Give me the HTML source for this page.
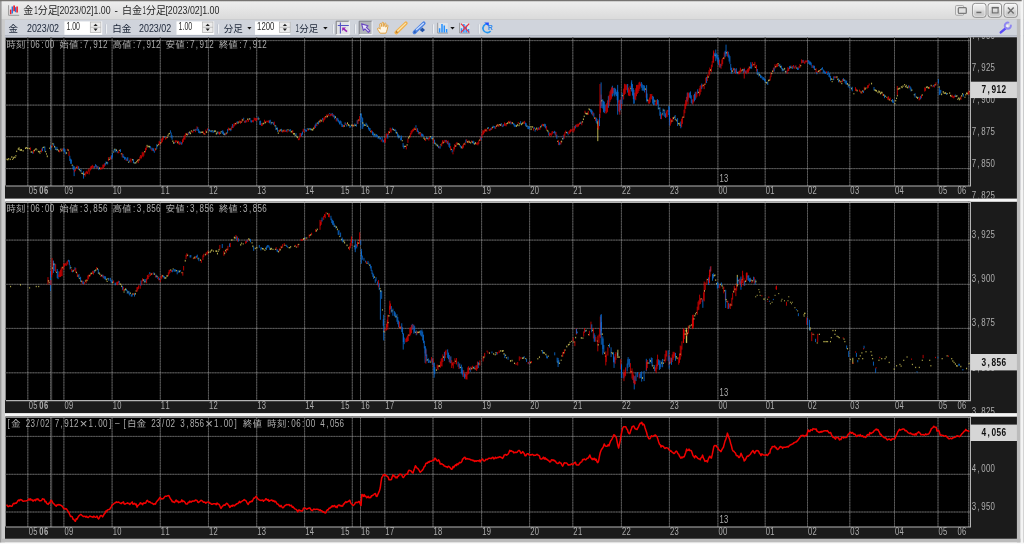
<!DOCTYPE html>
<html lang="ja"><head><meta charset="utf-8"><title>金1分足[2023/02]1.00 - 白金1分足[2023/02]1.00</title>
<style>
html,body{margin:0;padding:0;background:#c4c4c4;}
body{width:1024px;height:544px;overflow:hidden;position:relative;font-family:"Liberation Sans","Noto Sans CJK JP",sans-serif;}
.window{position:absolute;left:0;top:0;width:1024px;height:544px;overflow:hidden;background:#cfcfcf;}
.window>div{position:absolute;left:0;width:1024px;}
.window svg{display:block;position:absolute;left:0;top:0;}
.titlebar{top:0;height:19px;}
.toolbar{top:19px;height:19px;}
.charts{top:36px;height:508px;}
.charts svg{filter:blur(0.35px);}
.titlebar svg,.toolbar svg{filter:blur(0.3px);}
.frame{top:0;height:544px;pointer-events:none;}
text{white-space:pre;}
</style></head><body>
<div class="window">
<div class="titlebar"><svg width="1024" height="19" viewBox="0 0 1024 19">
<defs><linearGradient id="tg" x1="0" y1="0" x2="0" y2="1"><stop offset="0" stop-color="#efefef"/><stop offset="1" stop-color="#dadada"/></linearGradient>
<linearGradient id="bg" x1="0" y1="0" x2="0" y2="1"><stop offset="0" stop-color="#f6f6f6"/><stop offset="0.45" stop-color="#e2e2e2"/><stop offset="0.55" stop-color="#d4d4d4"/><stop offset="1" stop-color="#c2c2c2"/></linearGradient></defs>
<rect x="0" y="0" width="1024" height="19.3" fill="url(#tg)"/>
<g><path d="M8.6 5.2V15.3H19.2" stroke="#9a9a9a" stroke-width="1" fill="none"/><path d="M10.7 9.6V14.2" stroke="#f02030" stroke-width="1.5"/><path d="M12.3 6.4V13.4" stroke="#2878e0" stroke-width="1.4"/><path d="M14.1 5.6V11.2" stroke="#e81828" stroke-width="1.7"/><path d="M15.6 7.2V12.2" stroke="#2878e0" stroke-width="1.3"/><path d="M17.1 6.4V12.6" stroke="#f02030" stroke-width="1.6"/></g>
<text x="23.30" y="13.80" font-family='"Liberation Sans","Noto Sans CJK JP",sans-serif' font-size="10" fill="#262626">金</text>
<text x="34.30" y="13.80" font-family='"Liberation Sans","Noto Sans CJK JP",sans-serif' font-size="10" fill="#262626" textLength="3.40" lengthAdjust="spacingAndGlyphs">1</text>
<text x="37.70" y="13.80" font-family='"Liberation Sans","Noto Sans CJK JP",sans-serif' font-size="10" fill="#262626">分足</text>
<text x="57.00" y="13.80" font-family='"Liberation Sans","Noto Sans CJK JP",sans-serif' font-size="10" fill="#262626" textLength="53.60" lengthAdjust="spacingAndGlyphs">[2023/02]1.00</text>
<text x="114.60" y="13.80" font-family='"Liberation Sans","Noto Sans CJK JP",sans-serif' font-size="10" fill="#262626" textLength="3.40" lengthAdjust="spacingAndGlyphs">-</text>
<text x="122.10" y="13.80" font-family='"Liberation Sans","Noto Sans CJK JP",sans-serif' font-size="10" fill="#262626">白金</text>
<text x="142.60" y="13.80" font-family='"Liberation Sans","Noto Sans CJK JP",sans-serif' font-size="10" fill="#262626" textLength="3.40" lengthAdjust="spacingAndGlyphs">1</text>
<text x="146.00" y="13.80" font-family='"Liberation Sans","Noto Sans CJK JP",sans-serif' font-size="10" fill="#262626">分足</text>
<text x="165.40" y="13.80" font-family='"Liberation Sans","Noto Sans CJK JP",sans-serif' font-size="10" fill="#262626" textLength="54.00" lengthAdjust="spacingAndGlyphs">[2023/02]1.00</text>
<rect x="955.6" y="5.6" width="8" height="9.6" rx="0.8" fill="#efefef" stroke="#a4a4a4" stroke-width="1.0"/>
<rect x="958.3" y="7.6" width="8" height="5.8" rx="1" fill="#e0e0e0" stroke="#7a7a7a" stroke-width="1.3"/>
<rect x="972.6" y="3.4" width="13.4" height="13.9" rx="2.6" fill="url(#bg)" stroke="#8e8e8e" stroke-width="1.0"/>
<rect x="973.6" y="4.4" width="11.4" height="11.9" rx="1.8" fill="none" stroke="#ffffff" stroke-opacity="0.7" stroke-width="0.8"/>
<rect x="988.1" y="3.4" width="13.4" height="13.9" rx="2.6" fill="url(#bg)" stroke="#8e8e8e" stroke-width="1.0"/>
<rect x="989.1" y="4.4" width="11.4" height="11.9" rx="1.8" fill="none" stroke="#ffffff" stroke-opacity="0.7" stroke-width="0.8"/>
<rect x="1004.0" y="3.4" width="13.4" height="13.9" rx="2.6" fill="url(#bg)" stroke="#8e8e8e" stroke-width="1.0"/>
<rect x="1005.0" y="4.4" width="11.4" height="11.9" rx="1.8" fill="none" stroke="#ffffff" stroke-opacity="0.7" stroke-width="0.8"/>
<rect x="976.4" y="11.7" width="5" height="1.5" fill="#6a6a6a"/>
<rect x="992.3" y="7.6" width="5.8" height="5.3" fill="none" stroke="#6a6a6a" stroke-width="1.1"/><rect x="991.8" y="6.9" width="6.8" height="1.5" fill="#6a6a6a"/>
<path d="M1007.9 7.6L1013.7 13.4M1013.7 7.6L1007.9 13.4" stroke="#6c6c6c" stroke-width="1.4" fill="none"/>
</svg></div>
<div class="toolbar"><svg width="1024" height="19" viewBox="0 19 1024 19">
<rect x="0" y="19" width="1024" height="18.6" fill="#d0d4dc"/>
<rect x="0" y="19" width="1024" height="0.25" fill="#dcdcdc"/>
<rect x="0" y="19.2" width="1024" height="0.7" fill="#c8c8c8"/>
<rect x="0" y="35.2" width="1024" height="1.0" fill="#aeb4c0"/>
<rect x="0" y="36.2" width="1024" height="1.2" fill="#c9cdd6"/>
<text x="8.50" y="31.70" font-family='"Liberation Sans","Noto Sans CJK JP",sans-serif' font-size="9.5" fill="#1a2436">金</text>
<text x="27.00" y="31.70" font-family='"Liberation Sans","Noto Sans CJK JP",sans-serif' font-size="10.2" fill="#1a2436" textLength="32.00" lengthAdjust="spacingAndGlyphs">2023/02</text>
<rect x="64.4" y="21.4" width="37.8" height="13.7" fill="#ffffff"/><rect x="64.4" y="34.9" width="37.8" height="0.7" fill="#a4acbc"/><text x="66.40" y="29.90" font-family='"Liberation Sans","Noto Sans CJK JP",sans-serif' font-size="10.4" fill="#2a2a2a" textLength="13.60" lengthAdjust="spacingAndGlyphs">1.00</text>
<rect x="90.3" y="22.0" width="10.6" height="10.6" fill="#ececec" stroke="#b0b0b0" stroke-width="0.7"/><path d="M90.3 27.3H100.89999999999999" stroke="#b0b0b0" stroke-width="0.7"/><path d="M93.5 26.1L95.6 23.7L97.69999999999999 26.1Z" fill="#222"/><path d="M93.5 28.6L95.6 31.0L97.69999999999999 28.6Z" fill="#222"/>
<path d="M105.5 24.3V33.6" stroke="#b9bec8" stroke-width="0.8"/><path d="M106.4 24.3V33.6" stroke="#f2f4f7" stroke-width="1.0"/>
<text x="112.20" y="31.70" font-family='"Liberation Sans","Noto Sans CJK JP",sans-serif' font-size="9.5" fill="#1a2436">白金</text>
<text x="139.00" y="31.70" font-family='"Liberation Sans","Noto Sans CJK JP",sans-serif' font-size="10.2" fill="#1a2436" textLength="32.20" lengthAdjust="spacingAndGlyphs">2023/02</text>
<rect x="176.5" y="21.4" width="37.69999999999999" height="13.7" fill="#ffffff"/><rect x="176.5" y="34.9" width="37.69999999999999" height="0.7" fill="#a4acbc"/><text x="178.60" y="29.90" font-family='"Liberation Sans","Noto Sans CJK JP",sans-serif' font-size="10.4" fill="#2a2a2a" textLength="13.60" lengthAdjust="spacingAndGlyphs">1.00</text>
<rect x="202.4" y="22.0" width="10.6" height="10.6" fill="#ececec" stroke="#b0b0b0" stroke-width="0.7"/><path d="M202.4 27.3H213.0" stroke="#b0b0b0" stroke-width="0.7"/><path d="M205.60000000000002 26.1L207.70000000000002 23.7L209.8 26.1Z" fill="#222"/><path d="M205.60000000000002 28.6L207.70000000000002 31.0L209.8 28.6Z" fill="#222"/>
<path d="M217.7 24.3V33.6" stroke="#b9bec8" stroke-width="0.8"/><path d="M218.6 24.3V33.6" stroke="#f2f4f7" stroke-width="1.0"/>
<text x="223.80" y="31.70" font-family='"Liberation Sans","Noto Sans CJK JP",sans-serif' font-size="9.5" fill="#1a2436">分足</text>
<path d="M247.3 27.0H251.5L249.4 29.5Z" fill="#111"/>
<rect x="255.0" y="21.4" width="35.19999999999999" height="13.7" fill="#ffffff"/><rect x="255.0" y="34.9" width="35.19999999999999" height="0.7" fill="#a4acbc"/><text x="257.10" y="29.90" font-family='"Liberation Sans","Noto Sans CJK JP",sans-serif' font-size="10.4" fill="#2a2a2a" textLength="17.30" lengthAdjust="spacingAndGlyphs">1200</text>
<rect x="279.6" y="22.0" width="10.6" height="10.6" fill="#ececec" stroke="#b0b0b0" stroke-width="0.7"/><path d="M279.6 27.3H290.20000000000005" stroke="#b0b0b0" stroke-width="0.7"/><path d="M282.8 26.1L284.90000000000003 23.7L287.00000000000006 26.1Z" fill="#222"/><path d="M282.8 28.6L284.90000000000003 31.0L287.00000000000006 28.6Z" fill="#222"/>
<text x="295.50" y="31.70" font-family='"Liberation Sans","Noto Sans CJK JP",sans-serif' font-size="10.2" fill="#1a2436" textLength="3.40" lengthAdjust="spacingAndGlyphs">1</text>
<text x="299.20" y="31.70" font-family='"Liberation Sans","Noto Sans CJK JP",sans-serif' font-size="9.5" fill="#1a2436">分足</text>
<path d="M323.2 27.0H327.6L325.4 29.5Z" fill="#111"/>
<path d="M332.5 24.3V33.6" stroke="#b9bec8" stroke-width="0.8"/><path d="M333.4 24.3V33.6" stroke="#f2f4f7" stroke-width="1.0"/>
<rect x="336.2" y="21.2" width="13" height="13.4" fill="#e2e3e6"/><path d="M336.2 34.6V21.2H349.2" stroke="#7c7c80" stroke-width="1" fill="none"/><path d="M336.2 34.6H349.2V21.2" stroke="#f6f6f8" stroke-width="1" fill="none"/>
<path d="M340.4 22.6V33.4M337.8 25.5H348.8" stroke="#5252c4" stroke-width="1.1" fill="none"/>
<path d="M347 31.6L343.4 28.6" stroke="#9a22b4" stroke-width="1.5" fill="none"/><path d="M342.2 27.6H346.0L342.2 31.0Z" fill="#9a22b4"/>
<path d="M354.70000000000005 24.3V33.6" stroke="#b9bec8" stroke-width="0.8"/><path d="M355.6 24.3V33.6" stroke="#f2f4f7" stroke-width="1.0"/>
<rect x="359.2" y="21.2" width="12.9" height="13.4" fill="#b1b5bb"/><path d="M359.2 34.6V21.2H372.1" stroke="#7e8088" stroke-width="1" fill="none"/><path d="M359.2 34.6H372.1V21.2" stroke="#f4f4f8" stroke-width="1" fill="none"/>
<path d="M361.6 23.9L368.0 25.8L366.4 27.4L369.9 30.9L368.4 32.4L364.9 28.9L363.4 30.4Z" fill="#e8e4fa" stroke="#6a48c0" stroke-width="1.1" stroke-linejoin="round"/>
<path d="M380.2 33.2C378.8 31 377.2 29.4 377.6 28.4C378.2 27.6 379.4 28.2 380.2 29.2L379.8 24.2C379.9 23.2 381.2 23.2 381.4 24.2L381.8 26.6L382 22.9C382.2 22 383.5 22 383.6 23L383.8 26.6L384.6 23.6C385 22.8 386 23 386 24L385.8 27.2L386.8 25.4C387.4 24.8 388.1 25.2 387.9 26.2C387.4 28.6 387 31 385.8 33.2Z" fill="#fff6e4" stroke="#e0a040" stroke-width="1.0" stroke-linejoin="round"/>
<path d="M396.2 32.6L405.9 23.2" stroke="#efb04e" stroke-width="3.6" stroke-linecap="round"/><path d="M397.4 31.2L405.6 23.4" stroke="#fde4aa" stroke-width="1.3" stroke-linecap="round"/><path d="M395.7 33.1L398.2 32.4L396.4 30.6Z" fill="#b87828"/>
<path d="M414.4 32.4L423.8 23.2" stroke="#4b82e2" stroke-width="3.6" stroke-linecap="round"/><path d="M416.6 29.6L423.4 23.4" stroke="#c8dcff" stroke-width="1.3" stroke-linecap="round"/><path d="M413.8 33.1L416.4 32.4L414.5 30.6Z" fill="#2c5cb0"/><path d="M422.4 27.4L425.0 29.9L422.4 32.3L419.8 29.9Z" fill="#2454a8"/>
<path d="M432.70000000000005 24.3V33.6" stroke="#b9bec8" stroke-width="0.8"/><path d="M433.6 24.3V33.6" stroke="#f2f4f7" stroke-width="1.0"/>
<rect x="437.4" y="23.0" width="10.4" height="10" fill="#dfe3e8"/><path d="M437.7 22.8V33.0H448.0" stroke="#8e8e92" stroke-width="0.9" fill="none"/><path d="M439.59999999999997 28.2V32.6M442.0 23.9V32.6M444.29999999999995 25.4V32.6M446.59999999999997 29.0V32.6" stroke="#2490ff" stroke-width="1.5" fill="none"/>
<path d="M450.3 27.0H454.7L452.5 29.6Z" fill="#111"/>
<rect x="459.3" y="23.0" width="10.4" height="10" fill="#dfe3e8"/><path d="M459.6 22.8V33.0H469.90000000000003" stroke="#8e8e92" stroke-width="0.9" fill="none"/><path d="M461.5 28.2V32.6M463.90000000000003 23.9V32.6M466.2 25.4V32.6M468.5 29.0V32.6" stroke="#2490ff" stroke-width="1.5" fill="none"/>
<path d="M461.0 23.6L469.2 32.4M469.2 23.6L461.0 32.4" stroke="#f03040" stroke-width="1.3" fill="none"/>
<path d="M478.40000000000003 24.3V33.6" stroke="#b9bec8" stroke-width="0.8"/><path d="M479.3 24.3V33.6" stroke="#f2f4f7" stroke-width="1.0"/>
<path d="M487.6 24.0A4.3 4.3 0 1 0 490.6 31.0" stroke="#2496f0" stroke-width="1.6" fill="none"/><path d="M484.2 22.4H488.8V26.4Z" fill="#2050ff"/>
<text x="488.00" y="30.20" font-family='"Liberation Sans","Noto Sans CJK JP",sans-serif' font-size="7.4" fill="#2a86ee" textLength="4.80" lengthAdjust="spacingAndGlyphs" font-weight="bold">R</text>
<path d="M1000.8 32.4L1005.6 28.4" stroke="#5a4af8" stroke-width="2.5" stroke-linecap="round"/><path d="M1008.4 22.6A3.1 3.1 0 1 0 1010.9 25.4" stroke="#8f86f2" stroke-width="1.9" fill="none" stroke-linecap="round"/><circle cx="1007.4" cy="25.9" r="1.2" fill="#f4f2ff"/>
</svg></div>
<div class="charts"><svg width="1024" height="508" viewBox="0 36 1024 508">
<rect x="0" y="36" width="1024" height="508" fill="#c9cdd6"/>
<rect x="0" y="36" width="1024" height="0.2" fill="#aeb4c0"/>
<rect x="0" y="190" width="1024" height="354" fill="#f6f6f6"/>
<rect x="4.8" y="37.3" width="1012.4000000000001" height="161.3" fill="#1b1b1b"/>
<rect x="4.6" y="37.3" width="1.2000000000000002" height="148.2" fill="#cfcfcf"/>
<rect x="5.8" y="37.3" width="964.6500000000001" height="148.7" fill="#000"/>
<rect x="4.8" y="37.1" width="965.6500000000001" height="0.75" fill="#b4b8c2"/>
<path d="M5.8 40.60H970.45M5.8 73.00H970.45M5.8 105.10H970.45M5.8 136.70H970.45M5.8 168.60H970.45M27.80 37.3V186.0M50.60 37.3V186.0M63.90 37.3V186.0M112.10 37.3V186.0M160.30 37.3V186.0M208.45 37.3V186.0M256.70 37.3V186.0M304.60 37.3V186.0M352.30 37.3V186.0M360.50 37.3V186.0M384.80 37.3V186.0M433.00 37.3V186.0M481.60 37.3V186.0M529.60 37.3V186.0M572.80 37.3V186.0M621.40 37.3V186.0M669.40 37.3V186.0M717.90 37.3V186.0M765.20 37.3V186.0M807.50 37.3V186.0M849.80 37.3V186.0M894.50 37.3V186.0M938.00 37.3V186.0M968.70 37.3V186.0" stroke="#3a3a3a" stroke-width="1.0" fill="none"/>
<path d="M5.8 40.60H970.45M5.8 73.00H970.45M5.8 105.10H970.45M5.8 136.70H970.45M5.8 168.60H970.45M27.80 37.3V186.0M50.60 37.3V186.0M63.90 37.3V186.0M112.10 37.3V186.0M160.30 37.3V186.0M208.45 37.3V186.0M256.70 37.3V186.0M304.60 37.3V186.0M352.30 37.3V186.0M360.50 37.3V186.0M384.80 37.3V186.0M433.00 37.3V186.0M481.60 37.3V186.0M529.60 37.3V186.0M572.80 37.3V186.0M621.40 37.3V186.0M669.40 37.3V186.0M717.90 37.3V186.0M765.20 37.3V186.0M807.50 37.3V186.0M849.80 37.3V186.0M894.50 37.3V186.0M938.00 37.3V186.0M968.70 37.3V186.0" stroke="#646464" stroke-width="1.0" stroke-dasharray="0.805 0.805" fill="none"/>
<path d="M51.7 37.3V186.0" stroke="#4e4e4e" stroke-width="1.0" fill="none"/>
<path d="M27.25 40.60h1.1M27.25 73.00h1.1M27.25 105.10h1.1M27.25 136.70h1.1M27.25 168.60h1.1M50.05 40.60h1.1M50.05 73.00h1.1M50.05 105.10h1.1M50.05 136.70h1.1M50.05 168.60h1.1M63.35 40.60h1.1M63.35 73.00h1.1M63.35 105.10h1.1M63.35 136.70h1.1M63.35 168.60h1.1M111.55 40.60h1.1M111.55 73.00h1.1M111.55 105.10h1.1M111.55 136.70h1.1M111.55 168.60h1.1M159.75 40.60h1.1M159.75 73.00h1.1M159.75 105.10h1.1M159.75 136.70h1.1M159.75 168.60h1.1M207.90 40.60h1.1M207.90 73.00h1.1M207.90 105.10h1.1M207.90 136.70h1.1M207.90 168.60h1.1M256.15 40.60h1.1M256.15 73.00h1.1M256.15 105.10h1.1M256.15 136.70h1.1M256.15 168.60h1.1M304.05 40.60h1.1M304.05 73.00h1.1M304.05 105.10h1.1M304.05 136.70h1.1M304.05 168.60h1.1M351.75 40.60h1.1M351.75 73.00h1.1M351.75 105.10h1.1M351.75 136.70h1.1M351.75 168.60h1.1M359.95 40.60h1.1M359.95 73.00h1.1M359.95 105.10h1.1M359.95 136.70h1.1M359.95 168.60h1.1M384.25 40.60h1.1M384.25 73.00h1.1M384.25 105.10h1.1M384.25 136.70h1.1M384.25 168.60h1.1M432.45 40.60h1.1M432.45 73.00h1.1M432.45 105.10h1.1M432.45 136.70h1.1M432.45 168.60h1.1M481.05 40.60h1.1M481.05 73.00h1.1M481.05 105.10h1.1M481.05 136.70h1.1M481.05 168.60h1.1M529.05 40.60h1.1M529.05 73.00h1.1M529.05 105.10h1.1M529.05 136.70h1.1M529.05 168.60h1.1M572.25 40.60h1.1M572.25 73.00h1.1M572.25 105.10h1.1M572.25 136.70h1.1M572.25 168.60h1.1M620.85 40.60h1.1M620.85 73.00h1.1M620.85 105.10h1.1M620.85 136.70h1.1M620.85 168.60h1.1M668.85 40.60h1.1M668.85 73.00h1.1M668.85 105.10h1.1M668.85 136.70h1.1M668.85 168.60h1.1M717.35 40.60h1.1M717.35 73.00h1.1M717.35 105.10h1.1M717.35 136.70h1.1M717.35 168.60h1.1M764.65 40.60h1.1M764.65 73.00h1.1M764.65 105.10h1.1M764.65 136.70h1.1M764.65 168.60h1.1M806.95 40.60h1.1M806.95 73.00h1.1M806.95 105.10h1.1M806.95 136.70h1.1M806.95 168.60h1.1M849.25 40.60h1.1M849.25 73.00h1.1M849.25 105.10h1.1M849.25 136.70h1.1M849.25 168.60h1.1M893.95 40.60h1.1M893.95 73.00h1.1M893.95 105.10h1.1M893.95 136.70h1.1M893.95 168.60h1.1M937.45 40.60h1.1M937.45 73.00h1.1M937.45 105.10h1.1M937.45 136.70h1.1M937.45 168.60h1.1M968.15 40.60h1.1M968.15 73.00h1.1M968.15 105.10h1.1M968.15 136.70h1.1M968.15 168.60h1.1" stroke="#7a7a7a" stroke-width="1.1" fill="none"/>
<rect x="4.8" y="201.8" width="1012.4000000000001" height="211.3" fill="#1b1b1b"/>
<rect x="4.6" y="201.8" width="1.2000000000000002" height="198.3" fill="#cfcfcf"/>
<rect x="5.8" y="201.8" width="964.6500000000001" height="198.8" fill="#000"/>
<path d="M5.8 240.10H970.45M5.8 284.30H970.45M5.8 328.40H970.45M5.8 372.80H970.45M27.80 201.8V400.6M50.60 201.8V400.6M63.90 201.8V400.6M112.10 201.8V400.6M160.30 201.8V400.6M208.45 201.8V400.6M256.70 201.8V400.6M304.60 201.8V400.6M352.30 201.8V400.6M360.50 201.8V400.6M384.80 201.8V400.6M433.00 201.8V400.6M481.60 201.8V400.6M529.60 201.8V400.6M572.80 201.8V400.6M621.40 201.8V400.6M669.40 201.8V400.6M717.90 201.8V400.6M765.20 201.8V400.6M807.50 201.8V400.6M849.80 201.8V400.6M894.50 201.8V400.6M938.00 201.8V400.6M968.70 201.8V400.6" stroke="#3a3a3a" stroke-width="1.0" fill="none"/>
<path d="M5.8 240.10H970.45M5.8 284.30H970.45M5.8 328.40H970.45M5.8 372.80H970.45M27.80 201.8V400.6M50.60 201.8V400.6M63.90 201.8V400.6M112.10 201.8V400.6M160.30 201.8V400.6M208.45 201.8V400.6M256.70 201.8V400.6M304.60 201.8V400.6M352.30 201.8V400.6M360.50 201.8V400.6M384.80 201.8V400.6M433.00 201.8V400.6M481.60 201.8V400.6M529.60 201.8V400.6M572.80 201.8V400.6M621.40 201.8V400.6M669.40 201.8V400.6M717.90 201.8V400.6M765.20 201.8V400.6M807.50 201.8V400.6M849.80 201.8V400.6M894.50 201.8V400.6M938.00 201.8V400.6M968.70 201.8V400.6" stroke="#646464" stroke-width="1.0" stroke-dasharray="0.805 0.805" fill="none"/>
<path d="M51.7 201.8V400.6" stroke="#4e4e4e" stroke-width="1.0" fill="none"/>
<path d="M27.25 240.10h1.1M27.25 284.30h1.1M27.25 328.40h1.1M27.25 372.80h1.1M50.05 240.10h1.1M50.05 284.30h1.1M50.05 328.40h1.1M50.05 372.80h1.1M63.35 240.10h1.1M63.35 284.30h1.1M63.35 328.40h1.1M63.35 372.80h1.1M111.55 240.10h1.1M111.55 284.30h1.1M111.55 328.40h1.1M111.55 372.80h1.1M159.75 240.10h1.1M159.75 284.30h1.1M159.75 328.40h1.1M159.75 372.80h1.1M207.90 240.10h1.1M207.90 284.30h1.1M207.90 328.40h1.1M207.90 372.80h1.1M256.15 240.10h1.1M256.15 284.30h1.1M256.15 328.40h1.1M256.15 372.80h1.1M304.05 240.10h1.1M304.05 284.30h1.1M304.05 328.40h1.1M304.05 372.80h1.1M351.75 240.10h1.1M351.75 284.30h1.1M351.75 328.40h1.1M351.75 372.80h1.1M359.95 240.10h1.1M359.95 284.30h1.1M359.95 328.40h1.1M359.95 372.80h1.1M384.25 240.10h1.1M384.25 284.30h1.1M384.25 328.40h1.1M384.25 372.80h1.1M432.45 240.10h1.1M432.45 284.30h1.1M432.45 328.40h1.1M432.45 372.80h1.1M481.05 240.10h1.1M481.05 284.30h1.1M481.05 328.40h1.1M481.05 372.80h1.1M529.05 240.10h1.1M529.05 284.30h1.1M529.05 328.40h1.1M529.05 372.80h1.1M572.25 240.10h1.1M572.25 284.30h1.1M572.25 328.40h1.1M572.25 372.80h1.1M620.85 240.10h1.1M620.85 284.30h1.1M620.85 328.40h1.1M620.85 372.80h1.1M668.85 240.10h1.1M668.85 284.30h1.1M668.85 328.40h1.1M668.85 372.80h1.1M717.35 240.10h1.1M717.35 284.30h1.1M717.35 328.40h1.1M717.35 372.80h1.1M764.65 240.10h1.1M764.65 284.30h1.1M764.65 328.40h1.1M764.65 372.80h1.1M806.95 240.10h1.1M806.95 284.30h1.1M806.95 328.40h1.1M806.95 372.80h1.1M849.25 240.10h1.1M849.25 284.30h1.1M849.25 328.40h1.1M849.25 372.80h1.1M893.95 240.10h1.1M893.95 284.30h1.1M893.95 328.40h1.1M893.95 372.80h1.1M937.45 240.10h1.1M937.45 284.30h1.1M937.45 328.40h1.1M937.45 372.80h1.1M968.15 240.10h1.1M968.15 284.30h1.1M968.15 328.40h1.1M968.15 372.80h1.1" stroke="#7a7a7a" stroke-width="1.1" fill="none"/>
<rect x="4.8" y="416.7" width="1012.4000000000001" height="122.30000000000001" fill="#1b1b1b"/>
<rect x="4.6" y="416.7" width="1.2000000000000002" height="109.80000000000001" fill="#cfcfcf"/>
<rect x="5.8" y="416.7" width="964.6500000000001" height="110.30000000000001" fill="#000"/>
<path d="M5.8 436.40H970.45M5.8 474.30H970.45M5.8 512.00H970.45M27.80 416.7V527.0M50.60 416.7V527.0M63.90 416.7V527.0M112.10 416.7V527.0M160.30 416.7V527.0M208.45 416.7V527.0M256.70 416.7V527.0M304.60 416.7V527.0M352.30 416.7V527.0M360.50 416.7V527.0M384.80 416.7V527.0M433.00 416.7V527.0M481.60 416.7V527.0M529.60 416.7V527.0M572.80 416.7V527.0M621.40 416.7V527.0M669.40 416.7V527.0M717.90 416.7V527.0M765.20 416.7V527.0M807.50 416.7V527.0M849.80 416.7V527.0M894.50 416.7V527.0M938.00 416.7V527.0M968.70 416.7V527.0" stroke="#3a3a3a" stroke-width="1.0" fill="none"/>
<path d="M5.8 436.40H970.45M5.8 474.30H970.45M5.8 512.00H970.45M27.80 416.7V527.0M50.60 416.7V527.0M63.90 416.7V527.0M112.10 416.7V527.0M160.30 416.7V527.0M208.45 416.7V527.0M256.70 416.7V527.0M304.60 416.7V527.0M352.30 416.7V527.0M360.50 416.7V527.0M384.80 416.7V527.0M433.00 416.7V527.0M481.60 416.7V527.0M529.60 416.7V527.0M572.80 416.7V527.0M621.40 416.7V527.0M669.40 416.7V527.0M717.90 416.7V527.0M765.20 416.7V527.0M807.50 416.7V527.0M849.80 416.7V527.0M894.50 416.7V527.0M938.00 416.7V527.0M968.70 416.7V527.0" stroke="#646464" stroke-width="1.0" stroke-dasharray="0.805 0.805" fill="none"/>
<path d="M51.7 416.7V527.0" stroke="#4e4e4e" stroke-width="1.0" fill="none"/>
<path d="M27.25 436.40h1.1M27.25 474.30h1.1M27.25 512.00h1.1M50.05 436.40h1.1M50.05 474.30h1.1M50.05 512.00h1.1M63.35 436.40h1.1M63.35 474.30h1.1M63.35 512.00h1.1M111.55 436.40h1.1M111.55 474.30h1.1M111.55 512.00h1.1M159.75 436.40h1.1M159.75 474.30h1.1M159.75 512.00h1.1M207.90 436.40h1.1M207.90 474.30h1.1M207.90 512.00h1.1M256.15 436.40h1.1M256.15 474.30h1.1M256.15 512.00h1.1M304.05 436.40h1.1M304.05 474.30h1.1M304.05 512.00h1.1M351.75 436.40h1.1M351.75 474.30h1.1M351.75 512.00h1.1M359.95 436.40h1.1M359.95 474.30h1.1M359.95 512.00h1.1M384.25 436.40h1.1M384.25 474.30h1.1M384.25 512.00h1.1M432.45 436.40h1.1M432.45 474.30h1.1M432.45 512.00h1.1M481.05 436.40h1.1M481.05 474.30h1.1M481.05 512.00h1.1M529.05 436.40h1.1M529.05 474.30h1.1M529.05 512.00h1.1M572.25 436.40h1.1M572.25 474.30h1.1M572.25 512.00h1.1M620.85 436.40h1.1M620.85 474.30h1.1M620.85 512.00h1.1M668.85 436.40h1.1M668.85 474.30h1.1M668.85 512.00h1.1M717.35 436.40h1.1M717.35 474.30h1.1M717.35 512.00h1.1M764.65 436.40h1.1M764.65 474.30h1.1M764.65 512.00h1.1M806.95 436.40h1.1M806.95 474.30h1.1M806.95 512.00h1.1M849.25 436.40h1.1M849.25 474.30h1.1M849.25 512.00h1.1M893.95 436.40h1.1M893.95 474.30h1.1M893.95 512.00h1.1M937.45 436.40h1.1M937.45 474.30h1.1M937.45 512.00h1.1M968.15 436.40h1.1M968.15 474.30h1.1M968.15 512.00h1.1" stroke="#7a7a7a" stroke-width="1.1" fill="none"/>
<defs><clipPath id="cp0"><rect x="5.8" y="37.3" width="964.6500000000001" height="148.7"/></clipPath><clipPath id="cp1"><rect x="5.8" y="201.8" width="964.6500000000001" height="198.8"/></clipPath><clipPath id="cp2"><rect x="5.8" y="416.7" width="964.6500000000001" height="110.30000000000001"/></clipPath></defs>
<g clip-path="url(#cp0)">
<g stroke-width="0.79" fill="none"><path d="M7.02 158.59V160.07M7.83 158.96V160.41M8.63 158.04V159.43M10.24 158.56V160.10M11.85 156.20V157.90M12.66 158.79V159.98M13.46 157.28V158.83M14.27 156.55V157.70M15.07 156.81V158.13M15.88 155.12V156.43M16.68 150.64V152.10M18.29 148.18V149.97M19.10 147.29V148.73M19.90 148.93V150.56M20.71 149.44V150.96M21.51 149.10V150.79M23.12 150.01V151.56M25.54 147.50V149.07M26.34 147.04V148.19M27.15 147.61V148.89M27.95 147.72V149.21M29.56 147.90V149.19" stroke="#ece064"/><path d="M30.37 147.45V150.40" stroke="#e60000"/><path d="M31.17 151.33V152.77M31.98 151.33V152.69" stroke="#ece064"/><path d="M32.78 152.00V153.73" stroke="#0a72e0"/><path d="M33.59 149.95V153.44" stroke="#e60000"/><path d="M34.39 149.89V151.27M35.20 149.00V150.24M36.00 148.08V149.22M36.81 149.27V150.39M38.42 150.88V152.15M39.22 150.92V152.72M40.03 152.55V153.71M40.83 150.64V151.86" stroke="#ece064"/><path d="M41.64 148.49V152.40" stroke="#e60000"/><path d="M42.44 147.46V151.08" stroke="#0a72e0"/><path d="M43.25 146.89V148.10M44.05 146.54V147.79" stroke="#ece064"/><path d="M44.86 146.60V151.63" stroke="#0a72e0"/><path d="M45.66 150.95V152.30M46.47 153.30V154.59M47.27 155.46V157.22M49.69 147.61V148.86" stroke="#ece064"/><path d="M50.49 145.45V150.02" stroke="#0a72e0"/><path d="M51.30 146.29V147.45" stroke="#ece064"/><path d="M52.10 145.17V147.27" stroke="#e60000"/><path d="M52.91 142.96V144.62" stroke="#ece064"/><path d="M53.71 143.51V145.84" stroke="#0a72e0"/><path d="M54.52 145.85V147.58" stroke="#ece064"/><path d="M55.32 146.51V149.73" stroke="#0a72e0"/><path d="M56.13 148.82V149.93" stroke="#ece064"/><path d="M56.93 146.87V150.73" stroke="#0a72e0"/><path d="M57.74 148.94V150.22M58.54 150.20V151.59" stroke="#ece064"/><path d="M59.35 150.27V152.41M60.15 149.45V151.72" stroke="#e60000"/><path d="M60.96 148.50V149.91M61.76 150.05V151.48" stroke="#ece064"/><path d="M62.57 148.48V150.38" stroke="#e60000"/><path d="M63.37 148.35V150.68M64.18 148.41V152.19M64.98 149.27V152.54M65.79 152.11V154.38" stroke="#0a72e0"/><path d="M66.59 152.29V153.78" stroke="#ece064"/><path d="M67.40 148.77V150.42" stroke="#e60000"/><path d="M68.20 149.37V150.94" stroke="#ece064"/><path d="M69.01 151.24V156.14" stroke="#e60000"/><path d="M69.81 155.77V161.01M70.62 158.67V163.74M71.42 159.55V163.89" stroke="#0a72e0"/><path d="M72.23 164.51V166.00" stroke="#ece064"/><path d="M73.03 165.29V169.28M73.84 166.56V170.13M74.13 166.18V176.11" stroke="#0a72e0"/><path d="M74.64 169.86V172.27M75.45 168.94V170.74" stroke="#e60000"/><path d="M76.25 166.91V168.05" stroke="#ece064"/><path d="M77.06 165.50V168.35M77.86 166.33V168.92" stroke="#e60000"/><path d="M78.67 166.24V169.88" stroke="#0a72e0"/><path d="M79.47 169.14V170.32M80.28 170.10V171.34" stroke="#ece064"/><path d="M81.08 169.24V172.30" stroke="#0a72e0"/><path d="M81.89 172.72V173.99M82.69 172.76V174.20M83.50 173.47V175.14" stroke="#ece064"/><path d="M83.56 171.15V178.59" stroke="#0a72e0"/><path d="M84.30 173.60V175.06" stroke="#ece064"/><path d="M85.11 172.69V176.56M85.91 171.66V174.43M86.72 170.79V173.33M87.52 171.58V173.94M88.33 168.90V171.50M89.13 170.78V174.44M89.94 167.93V171.20M90.74 166.42V169.98M91.55 165.91V168.73M92.35 164.83V167.74M93.16 166.29V167.92M93.96 165.81V167.88" stroke="#e60000"/><path d="M94.77 166.01V168.17M95.57 164.17V166.58M96.38 165.23V167.69" stroke="#0a72e0"/><path d="M97.18 165.96V168.72" stroke="#e60000"/><path d="M97.99 166.16V168.70M98.79 167.87V170.12" stroke="#0a72e0"/><path d="M99.60 167.35V168.96" stroke="#ece064"/><path d="M100.40 167.62V169.70M101.21 167.52V169.31M102.01 167.26V169.29M102.82 164.58V167.91M103.62 164.59V168.50M104.43 163.36V166.75" stroke="#e60000"/><path d="M105.23 163.04V165.58M106.04 161.36V164.33" stroke="#0a72e0"/><path d="M106.84 162.00V163.51" stroke="#ece064"/><path d="M107.65 161.83V164.49" stroke="#0a72e0"/><path d="M108.45 157.21V161.06" stroke="#e60000"/><path d="M109.26 158.96V160.06M110.06 157.35V158.69" stroke="#ece064"/><path d="M110.87 155.64V159.88" stroke="#e60000"/><path d="M111.67 155.29V159.36M112.48 153.08V157.81" stroke="#0a72e0"/><path d="M113.28 151.45V152.62" stroke="#ece064"/><path d="M114.09 149.40V152.54" stroke="#0a72e0"/><path d="M114.89 148.59V150.36" stroke="#ece064"/><path d="M115.70 148.95V152.29" stroke="#0a72e0"/><path d="M116.50 149.51V151.12" stroke="#ece064"/><path d="M117.31 150.79V152.73" stroke="#0a72e0"/><path d="M118.11 151.97V153.51M118.92 150.11V153.00" stroke="#e60000"/><path d="M119.72 149.76V150.97" stroke="#ece064"/><path d="M120.53 149.23V152.08" stroke="#0a72e0"/><path d="M121.33 153.20V154.43" stroke="#ece064"/><path d="M122.14 153.06V157.30" stroke="#e60000"/><path d="M122.94 153.99V157.62M123.75 155.87V157.96M124.55 156.88V159.71M125.36 157.12V159.42" stroke="#0a72e0"/><path d="M126.16 159.04V161.06" stroke="#e60000"/><path d="M126.97 157.64V160.69M127.77 157.26V160.96" stroke="#0a72e0"/><path d="M128.58 161.57V162.77" stroke="#ece064"/><path d="M129.38 160.24V162.31" stroke="#0a72e0"/><path d="M130.19 158.37V161.24M130.99 160.22V162.58M131.80 158.72V159.74" stroke="#e60000"/><path d="M132.60 159.03V160.55" stroke="#ece064"/><path d="M133.41 159.03V163.07" stroke="#0a72e0"/><path d="M134.21 162.36V163.63" stroke="#ece064"/><path d="M135.02 162.16V163.59" stroke="#0a72e0"/><path d="M135.82 162.02V163.58M136.63 161.12V162.24M137.43 159.76V161.42" stroke="#ece064"/><path d="M138.24 159.12V163.08" stroke="#e60000"/><path d="M139.04 158.99V160.62" stroke="#ece064"/><path d="M139.85 156.64V159.60M140.65 154.99V158.36M141.46 155.47V158.49M142.26 151.86V156.31M143.07 152.79V157.16M143.87 151.99V155.73" stroke="#e60000"/><path d="M144.68 151.03V152.33" stroke="#ece064"/><path d="M145.48 148.08V152.34M146.29 146.23V150.08" stroke="#e60000"/><path d="M147.09 144.87V146.23M147.90 146.11V147.50M148.70 145.73V146.87M149.51 145.87V147.50" stroke="#ece064"/><path d="M150.31 145.98V148.41M151.12 147.51V149.69" stroke="#0a72e0"/><path d="M151.92 148.48V151.11" stroke="#e60000"/><path d="M152.73 147.80V150.68M153.53 148.43V151.18M154.34 150.39V152.71" stroke="#0a72e0"/><path d="M155.14 148.06V151.09" stroke="#e60000"/><path d="M155.95 148.55V149.69" stroke="#ece064"/><path d="M156.75 144.31V148.87" stroke="#0a72e0"/><path d="M157.56 145.18V146.35M158.36 143.87V145.26" stroke="#ece064"/><path d="M159.17 141.02V144.60M159.97 141.67V144.96" stroke="#e60000"/><path d="M160.78 142.30V143.58" stroke="#ece064"/><path d="M161.58 138.66V143.00M162.39 137.55V141.80M163.19 136.21V139.79" stroke="#e60000"/><path d="M164.00 136.20V137.51" stroke="#ece064"/><path d="M164.80 136.27V137.96" stroke="#0a72e0"/><path d="M165.61 137.25V139.61M166.41 136.90V138.49" stroke="#e60000"/><path d="M167.22 136.81V138.08M168.02 134.72V136.05M168.83 133.40V134.72M169.63 132.90V134.07" stroke="#ece064"/><path d="M170.44 130.32V133.11M171.24 132.52V137.76M172.05 135.25V139.73" stroke="#0a72e0"/><path d="M172.85 140.44V142.05M173.66 142.06V143.79" stroke="#ece064"/><path d="M174.46 142.26V143.59" stroke="#0a72e0"/><path d="M175.27 140.28V143.03M176.07 140.64V142.34M176.88 140.37V142.00" stroke="#e60000"/><path d="M177.68 141.58V143.34" stroke="#ece064"/><path d="M178.49 140.85V143.80M179.29 142.27V145.02" stroke="#e60000"/><path d="M180.10 141.44V143.98" stroke="#0a72e0"/><path d="M180.90 142.99V144.65" stroke="#e60000"/><path d="M181.71 142.13V144.73" stroke="#0a72e0"/><path d="M182.51 139.32V143.50M183.32 137.78V141.94M184.12 135.63V139.45M184.93 134.72V139.68M185.73 132.95V136.24" stroke="#e60000"/><path d="M186.54 133.51V134.92M187.34 133.85V135.47" stroke="#ece064"/><path d="M188.15 132.38V134.71" stroke="#e60000"/><path d="M188.95 131.90V134.61" stroke="#0a72e0"/><path d="M189.76 131.42V133.21M190.56 132.58V134.23M191.37 130.29V131.64" stroke="#ece064"/><path d="M192.17 130.73V132.60M192.98 130.79V132.63" stroke="#e60000"/><path d="M193.78 129.57V130.79" stroke="#ece064"/><path d="M194.59 129.48V130.98" stroke="#0a72e0"/><path d="M195.39 128.87V132.14" stroke="#e60000"/><path d="M196.20 128.88V130.63" stroke="#0a72e0"/><path d="M197.00 126.31V128.89" stroke="#e60000"/><path d="M197.81 127.21V130.82M198.61 129.06V132.88M199.42 130.73V133.22M200.22 131.63V133.53" stroke="#0a72e0"/><path d="M201.03 131.65V132.91M201.83 131.66V132.83M202.64 131.46V132.97" stroke="#ece064"/><path d="M203.44 131.47V134.26" stroke="#e60000"/><path d="M204.25 133.32V134.49" stroke="#ece064"/><path d="M205.05 133.38V134.99M205.86 129.61V133.04" stroke="#e60000"/><path d="M206.66 131.21V132.94" stroke="#ece064"/><path d="M207.47 128.33V130.48" stroke="#e60000"/><path d="M208.27 129.39V130.54M209.08 128.96V131.26" stroke="#0a72e0"/><path d="M209.88 130.19V131.33" stroke="#ece064"/><path d="M210.69 130.61V132.18M211.49 130.27V132.21" stroke="#0a72e0"/><path d="M212.30 130.32V131.45" stroke="#ece064"/><path d="M213.10 131.17V132.96M213.91 130.20V132.19" stroke="#0a72e0"/><path d="M214.71 130.40V132.12M215.52 130.47V131.74M216.32 132.87V134.59M217.13 131.64V133.38" stroke="#ece064"/><path d="M217.93 131.54V134.29" stroke="#0a72e0"/><path d="M218.74 131.72V133.66M219.54 131.82V134.73" stroke="#e60000"/><path d="M220.35 132.51V133.68M221.15 131.05V132.18" stroke="#ece064"/><path d="M221.96 130.83V133.34M222.76 130.27V134.07M223.57 131.68V135.00" stroke="#0a72e0"/><path d="M224.37 133.48V135.18" stroke="#ece064"/><path d="M225.18 133.12V135.36" stroke="#0a72e0"/><path d="M225.98 132.57V135.13" stroke="#e60000"/><path d="M226.79 132.46V133.74" stroke="#ece064"/><path d="M227.59 129.08V132.92" stroke="#0a72e0"/><path d="M228.40 127.63V130.48M229.20 129.04V130.56" stroke="#e60000"/><path d="M230.01 128.23V129.91" stroke="#ece064"/><path d="M230.81 128.90V131.16" stroke="#0a72e0"/><path d="M231.62 126.47V129.83" stroke="#e60000"/><path d="M232.42 124.07V127.89" stroke="#0a72e0"/><path d="M233.23 124.80V128.02M234.03 123.39V126.61M234.84 122.89V125.75" stroke="#e60000"/><path d="M235.64 123.00V124.28" stroke="#ece064"/><path d="M236.45 121.97V124.46" stroke="#e60000"/><path d="M237.25 121.20V123.36" stroke="#0a72e0"/><path d="M238.06 122.52V123.73M238.86 121.40V122.81" stroke="#ece064"/><path d="M239.67 120.53V122.53M240.47 120.89V123.79" stroke="#e60000"/><path d="M241.28 121.46V122.73" stroke="#ece064"/><path d="M242.08 118.64V122.21" stroke="#e60000"/><path d="M242.89 119.09V120.86" stroke="#ece064"/><path d="M243.69 117.73V119.39" stroke="#0a72e0"/><path d="M244.50 120.85V122.76" stroke="#e60000"/><path d="M245.30 120.41V122.70" stroke="#0a72e0"/><path d="M246.11 120.45V122.39M246.91 120.00V122.23" stroke="#e60000"/><path d="M247.72 118.47V120.08" stroke="#ece064"/><path d="M248.52 119.30V121.82" stroke="#e60000"/><path d="M249.33 118.15V119.69" stroke="#ece064"/><path d="M250.13 118.15V119.78M250.94 119.95V122.38M251.74 120.56V122.47" stroke="#0a72e0"/><path d="M252.55 120.21V121.97M253.35 120.02V122.39M254.16 117.59V120.10M254.96 118.04V120.68M255.77 117.97V121.11M256.57 118.41V120.84M257.38 118.08V119.44" stroke="#e60000"/><path d="M258.18 116.61V120.25" stroke="#0a72e0"/><path d="M258.99 118.28V119.47" stroke="#ece064"/><path d="M259.79 120.73V124.90M260.60 120.69V125.05" stroke="#0a72e0"/><path d="M261.40 123.11V126.02M262.21 124.12V126.05" stroke="#e60000"/><path d="M263.01 122.87V124.48M263.82 122.73V124.04" stroke="#ece064"/><path d="M264.62 119.78V123.00" stroke="#e60000"/><path d="M265.43 121.64V123.32" stroke="#ece064"/><path d="M266.23 121.24V122.56M267.04 120.39V122.04M267.84 121.01V122.36M268.65 120.32V122.76" stroke="#e60000"/><path d="M269.45 120.41V123.29M270.26 119.75V122.78M271.06 122.63V124.55" stroke="#0a72e0"/><path d="M271.87 121.93V123.36" stroke="#ece064"/><path d="M272.67 121.99V123.26M273.48 122.52V124.86" stroke="#0a72e0"/><path d="M274.28 121.64V125.02" stroke="#e60000"/><path d="M275.09 124.96V126.49" stroke="#ece064"/><path d="M275.89 125.50V130.08" stroke="#0a72e0"/><path d="M276.70 127.87V129.48" stroke="#ece064"/><path d="M277.50 127.54V131.86" stroke="#0a72e0"/><path d="M278.31 132.42V133.83M279.11 130.09V131.77" stroke="#ece064"/><path d="M279.92 129.38V131.98" stroke="#e60000"/><path d="M280.72 129.42V130.74" stroke="#ece064"/><path d="M281.53 128.83V131.75" stroke="#0a72e0"/><path d="M282.33 130.65V132.55" stroke="#e60000"/><path d="M283.14 129.81V131.56" stroke="#ece064"/><path d="M283.94 130.21V132.28M284.75 129.58V131.79M285.55 130.37V131.89" stroke="#e60000"/><path d="M286.36 129.55V131.73" stroke="#0a72e0"/><path d="M287.16 130.81V132.50" stroke="#e60000"/><path d="M287.97 129.11V130.51" stroke="#ece064"/><path d="M288.77 130.30V131.55" stroke="#e60000"/><path d="M289.58 129.66V131.30M290.38 129.16V131.13" stroke="#0a72e0"/><path d="M291.19 130.98V132.53M291.99 130.71V132.28" stroke="#ece064"/><path d="M292.80 130.20V133.45" stroke="#e60000"/><path d="M293.60 132.99V134.61M294.41 132.96V134.60M295.21 134.55V136.09" stroke="#ece064"/><path d="M296.02 133.21V136.26" stroke="#0a72e0"/><path d="M296.82 135.84V137.39M297.63 136.88V138.20" stroke="#ece064"/><path d="M298.43 138.50V140.20M299.24 137.19V140.14M300.04 133.09V137.30M300.85 133.02V136.99" stroke="#e60000"/><path d="M301.65 133.41V136.58M302.46 131.55V134.73" stroke="#0a72e0"/><path d="M303.26 128.74V131.88M304.07 130.49V132.43" stroke="#e60000"/><path d="M304.87 128.77V130.40M305.68 129.61V131.67M306.48 129.89V131.63M307.29 127.99V129.57" stroke="#0a72e0"/><path d="M308.09 129.04V131.03" stroke="#e60000"/><path d="M308.90 128.27V129.90" stroke="#ece064"/><path d="M309.70 128.11V129.37M310.51 128.16V130.24" stroke="#0a72e0"/><path d="M311.31 128.66V129.89M312.12 129.21V130.70M312.92 128.65V130.45M313.73 127.52V129.07" stroke="#ece064"/><path d="M314.53 125.54V128.97" stroke="#e60000"/><path d="M315.34 124.33V127.93M316.14 122.70V126.21" stroke="#0a72e0"/><path d="M316.95 123.82V126.08" stroke="#e60000"/><path d="M317.75 122.38V123.87" stroke="#ece064"/><path d="M318.56 121.25V124.33" stroke="#0a72e0"/><path d="M319.36 120.59V122.36" stroke="#ece064"/><path d="M320.17 119.60V122.74" stroke="#e60000"/><path d="M320.97 119.57V121.35M321.78 120.43V121.56" stroke="#ece064"/><path d="M322.58 117.94V120.22" stroke="#0a72e0"/><path d="M323.39 118.37V122.29M324.19 117.15V120.38M325.00 116.39V119.40" stroke="#e60000"/><path d="M325.80 116.06V117.33" stroke="#ece064"/><path d="M326.61 114.52V117.57" stroke="#e60000"/><path d="M327.41 115.52V117.28" stroke="#ece064"/><path d="M328.22 113.76V115.83M329.02 114.72V116.33" stroke="#e60000"/><path d="M329.83 112.95V114.27" stroke="#0a72e0"/><path d="M330.63 113.99V116.22M331.44 113.67V115.46" stroke="#e60000"/><path d="M332.24 112.97V116.03" stroke="#0a72e0"/><path d="M333.05 114.00V117.23" stroke="#e60000"/><path d="M333.85 114.84V117.26M334.66 115.64V119.24" stroke="#0a72e0"/><path d="M335.46 116.30V117.91" stroke="#ece064"/><path d="M336.27 117.98V121.45" stroke="#e60000"/><path d="M337.07 117.81V120.41M337.88 118.30V121.53M338.68 119.87V122.58M339.49 121.30V124.44M340.29 120.45V123.60M341.10 121.25V125.20M341.90 123.79V126.96M342.71 124.50V127.03" stroke="#0a72e0"/><path d="M343.51 125.04V127.25" stroke="#e60000"/><path d="M344.32 125.31V126.77" stroke="#ece064"/><path d="M345.12 122.30V125.03" stroke="#0a72e0"/><path d="M345.93 123.08V125.04" stroke="#e60000"/><path d="M346.73 124.51V126.51" stroke="#0a72e0"/><path d="M347.54 122.36V124.14M348.34 124.00V125.67M349.15 124.66V126.25" stroke="#ece064"/><path d="M349.95 125.27V128.00M350.76 125.75V126.92" stroke="#0a72e0"/><path d="M351.56 124.62V125.80M352.37 124.78V126.29" stroke="#ece064"/><path d="M353.17 124.27V126.76" stroke="#e60000"/><path d="M353.98 124.94V126.33" stroke="#ece064"/><path d="M354.78 123.56V125.41" stroke="#0a72e0"/><path d="M355.59 124.63V126.03" stroke="#ece064"/><path d="M356.39 124.19V126.62M357.20 120.26V123.91" stroke="#0a72e0"/><path d="M358.00 119.58V123.93" stroke="#e60000"/><path d="M358.81 119.42V120.62" stroke="#ece064"/><path d="M359.61 116.07V121.21" stroke="#e60000"/><path d="M360.42 113.82V115.37" stroke="#ece064"/><path d="M360.87 113.16V128.88M361.22 113.61V118.35M362.03 117.13V122.36M362.69 118.13V128.88" stroke="#0a72e0"/><path d="M362.83 122.23V123.74" stroke="#ece064"/><path d="M363.64 123.51V126.65" stroke="#0a72e0"/><path d="M364.44 124.37V125.68M365.25 124.73V126.00" stroke="#ece064"/><path d="M366.05 122.76V125.37M366.86 123.88V126.83" stroke="#0a72e0"/><path d="M367.66 125.59V126.85" stroke="#ece064"/><path d="M368.47 126.59V129.42M369.27 127.68V130.90M370.08 128.12V131.16" stroke="#0a72e0"/><path d="M370.88 130.94V132.31" stroke="#ece064"/><path d="M371.69 130.07V133.20" stroke="#e60000"/><path d="M372.49 131.34V135.11M373.30 132.25V135.60M374.10 133.78V136.92" stroke="#0a72e0"/><path d="M374.91 133.71V135.42" stroke="#ece064"/><path d="M375.71 134.99V137.22M376.52 134.14V136.58M377.32 134.88V137.18M378.13 136.05V139.02" stroke="#0a72e0"/><path d="M378.93 136.43V137.74" stroke="#ece064"/><path d="M379.74 137.39V139.37M380.54 137.23V139.40" stroke="#0a72e0"/><path d="M381.35 139.60V141.71" stroke="#e60000"/><path d="M382.15 136.79V140.39M382.96 139.61V142.39M383.76 140.24V142.23" stroke="#0a72e0"/><path d="M384.57 138.74V142.47M385.37 137.88V142.66M386.18 133.63V138.47M386.98 133.42V136.87" stroke="#e60000"/><path d="M387.79 134.06V138.68" stroke="#0a72e0"/><path d="M388.59 131.04V134.89" stroke="#e60000"/><path d="M389.40 131.54V133.08" stroke="#ece064"/><path d="M390.20 127.74V131.38M391.01 130.37V132.58M391.81 128.64V130.49" stroke="#e60000"/><path d="M392.62 127.60V130.03" stroke="#0a72e0"/><path d="M393.42 128.88V130.09M394.23 129.76V130.93" stroke="#ece064"/><path d="M395.03 128.94V130.89M395.84 129.92V133.20" stroke="#0a72e0"/><path d="M396.64 131.85V133.58" stroke="#ece064"/><path d="M397.45 132.49V136.59M398.25 134.28V138.48" stroke="#0a72e0"/><path d="M399.06 135.71V137.46" stroke="#ece064"/><path d="M399.86 135.57V138.13M400.67 137.80V140.38M401.47 135.59V140.17" stroke="#0a72e0"/><path d="M402.28 140.08V141.30" stroke="#ece064"/><path d="M403.08 143.09V147.15M403.89 145.46V148.69" stroke="#0a72e0"/><path d="M404.69 145.84V147.08M405.50 145.82V146.95" stroke="#ece064"/><path d="M406.30 145.72V149.37" stroke="#e60000"/><path d="M407.11 144.23V145.64" stroke="#ece064"/><path d="M407.91 138.49V142.92" stroke="#e60000"/><path d="M408.72 136.92V138.69M409.52 135.63V137.22" stroke="#ece064"/><path d="M410.33 133.09V137.30M411.13 130.77V134.70M411.94 130.06V133.40M412.74 128.98V131.84M413.55 128.54V131.12M414.35 127.44V130.14" stroke="#e60000"/><path d="M415.16 128.39V129.99" stroke="#ece064"/><path d="M415.96 125.23V127.85" stroke="#0a72e0"/><path d="M416.77 128.08V131.78" stroke="#e60000"/><path d="M417.57 128.35V131.86M418.38 130.79V133.81" stroke="#0a72e0"/><path d="M419.18 132.29V134.70" stroke="#e60000"/><path d="M419.99 132.08V133.39" stroke="#ece064"/><path d="M420.79 133.01V136.23" stroke="#e60000"/><path d="M421.60 133.48V135.97M422.40 133.78V136.41M423.21 134.50V137.28" stroke="#0a72e0"/><path d="M424.01 137.29V139.03M424.82 138.55V140.14" stroke="#ece064"/><path d="M425.62 138.07V141.07" stroke="#e60000"/><path d="M426.43 136.94V139.07" stroke="#0a72e0"/><path d="M427.23 137.72V139.31" stroke="#ece064"/><path d="M428.04 137.29V139.11" stroke="#0a72e0"/><path d="M428.84 137.99V140.55M429.65 137.04V138.92" stroke="#e60000"/><path d="M430.45 136.06V137.37" stroke="#ece064"/><path d="M431.26 137.32V139.21M432.06 136.16V138.81" stroke="#0a72e0"/><path d="M432.87 137.96V139.45" stroke="#ece064"/><path d="M433.67 138.75V143.36" stroke="#e60000"/><path d="M434.48 139.68V144.13" stroke="#0a72e0"/><path d="M435.28 142.69V143.83M436.09 143.80V145.40" stroke="#ece064"/><path d="M436.89 143.81V146.12" stroke="#0a72e0"/><path d="M437.70 144.75V146.55" stroke="#ece064"/><path d="M438.50 145.88V148.15" stroke="#0a72e0"/><path d="M439.31 146.52V148.31" stroke="#e60000"/><path d="M440.11 145.86V148.63" stroke="#0a72e0"/><path d="M440.92 144.27V145.47" stroke="#ece064"/><path d="M441.72 142.77V146.34M442.53 140.25V143.79" stroke="#e60000"/><path d="M443.33 141.71V143.39" stroke="#ece064"/><path d="M444.14 140.11V142.60M444.94 139.82V142.95" stroke="#e60000"/><path d="M445.75 140.13V141.81" stroke="#0a72e0"/><path d="M446.55 139.93V142.71" stroke="#e60000"/><path d="M447.36 141.09V144.04" stroke="#0a72e0"/><path d="M448.16 140.50V144.94" stroke="#e60000"/><path d="M448.97 142.65V146.79M449.77 143.28V148.11" stroke="#0a72e0"/><path d="M450.58 146.08V150.40" stroke="#e60000"/><path d="M451.38 148.79V149.95" stroke="#ece064"/><path d="M452.19 149.43V152.41" stroke="#0a72e0"/><path d="M452.99 152.25V154.34M453.80 147.04V151.70M454.60 144.20V149.34" stroke="#e60000"/><path d="M455.41 145.21V146.78" stroke="#ece064"/><path d="M456.21 142.80V146.70M457.02 141.96V143.61" stroke="#e60000"/><path d="M457.82 143.17V144.87M458.63 143.11V144.58M459.43 143.82V145.32" stroke="#ece064"/><path d="M460.24 145.00V147.11M461.04 146.00V148.41" stroke="#0a72e0"/><path d="M461.85 146.51V148.30" stroke="#ece064"/><path d="M462.65 145.27V148.93M463.46 143.84V147.68" stroke="#e60000"/><path d="M464.26 143.19V144.71" stroke="#ece064"/><path d="M465.07 142.22V145.25" stroke="#e60000"/><path d="M465.87 139.57V142.89" stroke="#0a72e0"/><path d="M466.68 139.29V141.66" stroke="#e60000"/><path d="M467.48 141.08V142.70" stroke="#ece064"/><path d="M468.29 140.64V143.24" stroke="#e60000"/><path d="M469.09 140.72V142.47M469.90 141.76V142.99M470.70 142.41V143.53" stroke="#ece064"/><path d="M471.51 140.58V142.28" stroke="#e60000"/><path d="M472.31 141.26V142.97" stroke="#ece064"/><path d="M473.12 140.67V143.62M473.92 141.59V144.33" stroke="#0a72e0"/><path d="M474.73 143.08V144.75M475.53 142.17V143.86" stroke="#ece064"/><path d="M476.34 143.12V144.61M477.14 142.34V144.47M477.95 142.38V145.37M478.75 140.34V143.98" stroke="#e60000"/><path d="M479.56 139.49V140.69" stroke="#ece064"/><path d="M480.36 136.68V140.90" stroke="#e60000"/><path d="M481.17 135.91V139.67" stroke="#0a72e0"/><path d="M481.97 133.45V138.08M482.78 130.21V134.82M483.58 130.65V134.40M484.39 129.49V132.83M485.19 128.74V131.87" stroke="#e60000"/><path d="M486.00 129.62V130.96" stroke="#ece064"/><path d="M486.80 128.88V131.87" stroke="#e60000"/><path d="M487.61 127.64V128.79" stroke="#ece064"/><path d="M488.41 127.03V128.73" stroke="#0a72e0"/><path d="M489.22 128.86V130.89M490.02 128.92V131.11" stroke="#e60000"/><path d="M490.83 128.01V130.03" stroke="#0a72e0"/><path d="M491.63 127.36V130.00" stroke="#e60000"/><path d="M492.44 126.76V128.28" stroke="#ece064"/><path d="M493.24 125.70V127.91M494.05 126.02V127.40M494.85 126.17V128.66" stroke="#0a72e0"/><path d="M495.66 126.43V128.86" stroke="#e60000"/><path d="M496.46 125.34V126.73" stroke="#ece064"/><path d="M497.27 123.99V126.40" stroke="#e60000"/><path d="M498.07 124.42V126.17" stroke="#ece064"/><path d="M498.88 124.71V126.97" stroke="#e60000"/><path d="M499.68 124.05V125.25M500.49 124.19V125.86" stroke="#ece064"/><path d="M501.29 123.08V125.69" stroke="#0a72e0"/><path d="M502.10 124.40V126.81" stroke="#e60000"/><path d="M502.90 125.42V127.08M503.71 124.09V125.95" stroke="#0a72e0"/><path d="M504.51 122.43V125.70M505.32 123.70V125.67M506.12 123.06V126.34" stroke="#e60000"/><path d="M506.93 123.02V124.24M507.73 122.26V123.91" stroke="#ece064"/><path d="M508.54 120.88V122.97" stroke="#e60000"/><path d="M509.34 121.77V123.50" stroke="#ece064"/><path d="M510.15 120.78V123.06" stroke="#e60000"/><path d="M510.95 121.76V124.42" stroke="#0a72e0"/><path d="M511.76 122.14V123.88" stroke="#e60000"/><path d="M512.56 122.18V123.81" stroke="#ece064"/><path d="M513.37 122.99V124.89M514.17 123.59V126.40M514.98 124.73V127.13M515.78 124.87V126.84" stroke="#0a72e0"/><path d="M516.59 125.17V126.88M517.39 124.13V125.83" stroke="#ece064"/><path d="M518.20 122.06V123.83" stroke="#e60000"/><path d="M519.00 124.65V126.26M519.81 122.90V124.48" stroke="#ece064"/><path d="M520.61 121.12V123.87" stroke="#0a72e0"/><path d="M521.42 123.56V125.22M522.22 122.90V124.30M523.03 121.83V123.62" stroke="#ece064"/><path d="M523.83 121.62V123.42M524.64 120.87V123.91" stroke="#e60000"/><path d="M525.44 122.56V125.86M526.25 123.28V127.13" stroke="#0a72e0"/><path d="M527.05 125.53V126.66" stroke="#ece064"/><path d="M527.86 125.76V129.08M528.66 126.03V129.20M529.47 126.73V128.73" stroke="#0a72e0"/><path d="M530.27 126.15V127.52M531.08 128.29V130.09M531.88 126.06V127.59M532.69 126.40V127.64" stroke="#ece064"/><path d="M533.49 127.88V130.59" stroke="#e60000"/><path d="M534.30 127.07V129.07M535.10 129.74V131.65" stroke="#0a72e0"/><path d="M535.91 128.50V130.04M536.71 127.46V128.93" stroke="#ece064"/><path d="M537.52 128.29V130.68" stroke="#e60000"/><path d="M538.32 127.36V129.61" stroke="#0a72e0"/><path d="M539.13 127.90V129.83M539.93 126.88V129.69" stroke="#e60000"/><path d="M540.74 125.90V127.57" stroke="#ece064"/><path d="M541.54 124.71V126.68" stroke="#0a72e0"/><path d="M542.35 123.83V125.98M543.15 124.14V126.49" stroke="#e60000"/><path d="M543.96 124.35V125.73" stroke="#ece064"/><path d="M544.76 123.65V127.22M545.57 124.29V128.35" stroke="#0a72e0"/><path d="M546.37 126.05V129.83" stroke="#e60000"/><path d="M547.18 129.77V130.99M547.98 130.59V132.27" stroke="#ece064"/><path d="M548.79 131.99V135.51" stroke="#0a72e0"/><path d="M549.59 132.84V136.12M550.40 133.25V134.94M551.20 133.41V136.51M552.01 131.37V134.71M552.81 131.15V133.74" stroke="#e60000"/><path d="M553.62 132.08V133.03M554.42 130.84V133.36M555.23 131.66V135.49" stroke="#0a72e0"/><path d="M556.03 131.93V136.78" stroke="#e60000"/><path d="M556.84 134.68V138.75" stroke="#0a72e0"/><path d="M557.64 140.75V141.91" stroke="#ece064"/><path d="M558.45 140.22V145.07" stroke="#e60000"/><path d="M559.25 142.17V145.16M560.06 143.01V144.55" stroke="#0a72e0"/><path d="M560.86 140.92V144.42" stroke="#e60000"/><path d="M561.67 140.65V142.35M562.47 138.11V139.42" stroke="#ece064"/><path d="M563.28 135.32V139.58" stroke="#0a72e0"/><path d="M564.08 134.16V138.74M564.89 132.18V135.87M565.69 130.62V133.15" stroke="#e60000"/><path d="M566.50 131.91V133.20" stroke="#ece064"/><path d="M567.30 131.84V133.93M568.11 134.14V135.37" stroke="#0a72e0"/><path d="M568.91 131.35V134.14M569.72 130.25V133.58M570.52 129.27V132.32M571.33 129.19V130.89M572.13 130.09V132.05M572.94 127.60V129.92M573.74 128.69V132.39M574.55 126.03V130.49" stroke="#e60000"/><path d="M575.35 125.17V128.41" stroke="#0a72e0"/><path d="M576.16 124.25V126.77M576.96 124.57V127.35M577.77 123.73V126.69M578.57 123.93V126.49M579.38 122.79V124.88" stroke="#e60000"/><path d="M580.18 122.57V123.77" stroke="#ece064"/><path d="M580.99 121.61V123.98" stroke="#0a72e0"/><path d="M581.79 121.58V125.25" stroke="#e60000"/><path d="M582.60 121.21V122.54M583.40 118.42V120.07M584.21 115.61V117.10" stroke="#ece064"/><path d="M585.01 110.69V113.50" stroke="#e60000"/><path d="M585.82 112.63V114.19M586.62 112.98V114.54M587.43 112.78V114.54" stroke="#ece064"/><path d="M588.23 110.86V114.89" stroke="#e60000"/><path d="M589.04 108.30V109.75M589.84 109.04V110.51" stroke="#ece064"/><path d="M590.65 109.28V112.32M591.45 109.56V113.85M592.26 110.66V115.14" stroke="#0a72e0"/><path d="M593.06 111.92V115.98" stroke="#e60000"/><path d="M593.87 113.23V117.32" stroke="#0a72e0"/><path d="M594.67 117.36V118.88" stroke="#ece064"/><path d="M595.48 117.28V120.98" stroke="#e60000"/><path d="M596.28 117.69V122.73M597.09 118.87V124.06" stroke="#0a72e0"/><path d="M597.81 121.29V141.15" stroke="#ece064"/><path d="M597.89 125.62V127.89M598.70 119.57V129.65" stroke="#e60000"/><path d="M599.50 113.91V126.09" stroke="#0a72e0"/><path d="M599.96 84.06V117.98M600.31 101.13V112.61M601.11 94.59V106.28" stroke="#e60000"/><path d="M601.12 82.41V108.06" stroke="#0a72e0"/><path d="M601.92 99.87V101.47" stroke="#ece064"/><path d="M602.72 99.22V108.50M603.53 100.78V112.15M604.33 101.61V113.11M605.14 105.27V111.37" stroke="#0a72e0"/><path d="M605.94 106.04V113.67M606.75 103.23V112.96M607.55 100.40V111.90" stroke="#e60000"/><path d="M608.36 96.15V107.78" stroke="#0a72e0"/><path d="M609.16 94.76V105.64M609.97 91.37V101.91M610.77 89.62V100.06M611.58 87.37V98.76" stroke="#e60000"/><path d="M612.37 85.72V96.47" stroke="#0a72e0"/><path d="M612.38 87.36V93.75M613.19 88.16V93.24" stroke="#e60000"/><path d="M613.99 87.85V95.51M614.80 87.81V96.50M615.60 88.81V94.48M616.41 91.78V96.10M617.21 90.14V100.25M617.66 84.89V114.67M618.02 91.78V102.40" stroke="#0a72e0"/><path d="M618.82 100.44V111.42" stroke="#e60000"/><path d="M619.63 104.01V112.24" stroke="#0a72e0"/><path d="M619.81 99.78V114.67" stroke="#e60000"/><path d="M620.43 99.65V110.23" stroke="#0a72e0"/><path d="M621.24 97.09V108.75" stroke="#e60000"/><path d="M622.04 92.73V104.05" stroke="#0a72e0"/><path d="M622.85 94.95V96.28" stroke="#ece064"/><path d="M623.65 88.66V99.49M624.46 83.80V94.84M625.26 84.12V93.86M626.07 85.25V89.88M626.87 84.04V90.34" stroke="#e60000"/><path d="M627.68 84.00V92.60" stroke="#0a72e0"/><path d="M628.48 87.54V95.49M629.29 89.50V96.10M630.09 85.81V95.82" stroke="#e60000"/><path d="M630.90 87.82V89.10" stroke="#ece064"/><path d="M631.40 82.41V91.51M631.70 80.29V87.43M632.51 84.11V95.59M633.31 88.07V99.20M633.88 89.86V103.92M634.12 93.06V103.36" stroke="#0a72e0"/><path d="M634.92 92.48V99.03M635.73 88.27V100.27M636.53 85.06V96.21M637.34 84.75V93.96M638.14 85.07V92.91M638.95 82.50V90.98M639.75 81.78V88.85M640.56 83.55V86.24" stroke="#e60000"/><path d="M641.36 82.06V87.74M642.17 83.68V90.54M642.97 85.20V90.61M643.78 85.07V90.71M644.58 85.62V92.45" stroke="#0a72e0"/><path d="M645.39 88.37V89.90" stroke="#ece064"/><path d="M646.19 88.98V97.71" stroke="#e60000"/><path d="M646.62 85.16V100.87M647.00 93.53V102.31" stroke="#0a72e0"/><path d="M647.80 99.46V101.00" stroke="#ece064"/><path d="M648.61 99.99V103.59M649.41 97.51V103.77M650.22 94.01V102.46M651.02 94.14V98.67M651.83 94.09V99.48" stroke="#e60000"/><path d="M652.63 95.93V103.61M653.44 96.71V104.99M654.24 99.43V105.12" stroke="#0a72e0"/><path d="M655.05 100.36V101.78" stroke="#ece064"/><path d="M655.85 102.25V105.00M656.66 99.86V104.88" stroke="#e60000"/><path d="M657.46 99.11V104.60M658.27 100.14V109.55" stroke="#0a72e0"/><path d="M659.07 107.83V109.08" stroke="#ece064"/><path d="M659.88 107.18V115.79M660.68 112.03V119.06" stroke="#0a72e0"/><path d="M661.49 114.16V119.20" stroke="#e60000"/><path d="M662.29 113.29V114.50" stroke="#ece064"/><path d="M663.10 108.57V115.73" stroke="#0a72e0"/><path d="M663.90 109.60V110.77" stroke="#ece064"/><path d="M664.71 109.71V116.84M665.51 113.33V117.90" stroke="#0a72e0"/><path d="M666.32 111.48V117.43M667.12 109.87V116.91M667.93 109.91V111.69" stroke="#e60000"/><path d="M668.73 105.86V115.11M669.45 106.67V125.69M669.54 113.32V120.95" stroke="#0a72e0"/><path d="M670.34 118.17V125.70M671.15 119.10V123.55" stroke="#e60000"/><path d="M671.95 120.34V121.77" stroke="#ece064"/><path d="M672.76 117.10V121.86" stroke="#e60000"/><path d="M673.56 117.33V119.07M674.37 116.57V117.84" stroke="#ece064"/><path d="M675.17 115.05V120.06" stroke="#0a72e0"/><path d="M675.98 119.18V120.35M676.78 120.11V121.38" stroke="#ece064"/><path d="M677.59 118.16V126.06" stroke="#0a72e0"/><path d="M678.39 123.07V124.18M679.20 122.79V124.57M680.00 124.52V125.97" stroke="#ece064"/><path d="M680.81 121.49V128.28" stroke="#0a72e0"/><path d="M681.61 118.72V127.08M682.42 116.73V123.89" stroke="#e60000"/><path d="M683.22 116.40V118.02" stroke="#ece064"/><path d="M684.03 109.69V117.87M684.83 103.78V113.26M685.64 100.07V108.93M686.44 96.84V105.79" stroke="#e60000"/><path d="M687.25 92.63V101.59" stroke="#0a72e0"/><path d="M687.98 92.60V104.18M688.05 92.50V99.61M688.86 93.60V97.67" stroke="#e60000"/><path d="M689.66 92.46V97.68M690.47 91.42V98.53M691.27 95.25V102.91M692.08 99.74V104.31" stroke="#0a72e0"/><path d="M692.88 99.06V104.58M693.69 94.85V102.50" stroke="#e60000"/><path d="M694.49 93.76V101.33M695.30 91.76V99.78" stroke="#0a72e0"/><path d="M696.10 92.42V98.36M696.91 91.55V96.74" stroke="#e60000"/><path d="M697.71 89.26V93.69" stroke="#0a72e0"/><path d="M698.52 91.79V93.04" stroke="#ece064"/><path d="M699.32 88.30V96.26M700.13 85.86V94.62M700.93 84.97V91.90" stroke="#e60000"/><path d="M701.74 83.56V88.93" stroke="#0a72e0"/><path d="M702.54 84.62V87.33" stroke="#e60000"/><path d="M703.35 84.77V86.13" stroke="#ece064"/><path d="M704.15 83.85V89.11" stroke="#e60000"/><path d="M704.96 83.66V84.83" stroke="#ece064"/><path d="M705.76 77.64V83.69" stroke="#e60000"/><path d="M706.57 77.04V82.96" stroke="#0a72e0"/><path d="M707.37 74.52V80.96" stroke="#e60000"/><path d="M708.18 76.15V77.88" stroke="#ece064"/><path d="M708.98 70.20V76.35M709.79 67.51V74.73" stroke="#e60000"/><path d="M710.59 69.22V70.91" stroke="#ece064"/><path d="M711.40 64.71V72.08M712.20 61.18V67.26M713.01 55.69V62.34M713.63 50.41V62.82M713.81 51.74V58.36" stroke="#e60000"/><path d="M714.62 53.26V56.25" stroke="#0a72e0"/><path d="M715.42 54.67V56.08" stroke="#ece064"/><path d="M715.78 49.58V61.16M716.23 53.21V57.74M717.03 54.13V59.48M717.84 54.99V62.81M718.64 57.53V65.21" stroke="#0a72e0"/><path d="M719.45 59.64V67.47" stroke="#e60000"/><path d="M720.25 63.94V67.63" stroke="#0a72e0"/><path d="M721.06 63.63V68.70M721.86 59.43V66.04M722.67 57.97V64.20" stroke="#e60000"/><path d="M723.47 57.41V58.84" stroke="#ece064"/><path d="M724.28 52.32V59.22" stroke="#e60000"/><path d="M725.08 50.85V57.32M725.89 51.53V54.16M726.04 44.62V56.20" stroke="#0a72e0"/><path d="M726.69 52.11V53.36" stroke="#ece064"/><path d="M727.50 51.27V56.53" stroke="#e60000"/><path d="M728.30 51.72V57.59M729.11 54.62V61.54M729.91 56.15V63.76M730.72 63.90V70.22M731.52 67.75V73.65" stroke="#0a72e0"/><path d="M732.33 70.28V71.96" stroke="#ece064"/><path d="M733.13 67.71V71.33" stroke="#e60000"/><path d="M733.94 68.56V69.74" stroke="#ece064"/><path d="M734.74 68.09V72.94" stroke="#0a72e0"/><path d="M735.55 69.15V73.66" stroke="#e60000"/><path d="M736.35 68.26V73.07M737.16 71.76V74.19" stroke="#0a72e0"/><path d="M737.96 71.90V73.21" stroke="#ece064"/><path d="M738.77 71.26V74.34M739.57 70.66V74.11M740.38 67.71V72.82M741.18 69.20V71.83" stroke="#e60000"/><path d="M741.99 70.11V71.38M742.79 68.90V70.52" stroke="#ece064"/><path d="M743.60 68.99V72.74" stroke="#0a72e0"/><path d="M744.24 67.78V78.54" stroke="#e60000"/><path d="M744.40 69.02V71.47" stroke="#0a72e0"/><path d="M745.21 70.30V73.14" stroke="#e60000"/><path d="M746.01 70.91V73.12" stroke="#0a72e0"/><path d="M746.82 69.94V74.24M747.62 68.78V72.58M748.43 67.90V72.64M749.23 66.22V70.59" stroke="#e60000"/><path d="M750.04 66.80V68.38" stroke="#ece064"/><path d="M750.84 62.18V68.48M751.65 64.41V68.63" stroke="#0a72e0"/><path d="M752.45 62.11V66.50M753.26 64.27V65.70" stroke="#e60000"/><path d="M754.06 63.84V64.94" stroke="#ece064"/><path d="M754.87 61.87V67.75" stroke="#e60000"/><path d="M755.67 66.69V67.87" stroke="#ece064"/><path d="M756.48 64.91V71.46" stroke="#e60000"/><path d="M757.28 69.01V74.82" stroke="#0a72e0"/><path d="M758.09 73.37V74.54" stroke="#ece064"/><path d="M758.89 71.86V76.52" stroke="#0a72e0"/><path d="M759.70 73.96V75.71" stroke="#ece064"/><path d="M760.50 74.81V77.87M761.31 75.63V77.74M762.11 76.32V78.79M762.92 77.52V80.14M763.72 77.06V80.12M764.53 78.38V81.20M765.33 79.36V82.91" stroke="#0a72e0"/><path d="M766.14 81.87V83.18M766.94 82.04V83.68" stroke="#ece064"/><path d="M767.75 81.55V85.00" stroke="#0a72e0"/><path d="M768.55 79.76V81.29M769.36 79.37V80.83" stroke="#ece064"/><path d="M770.16 76.45V80.52M770.97 72.25V77.16" stroke="#e60000"/><path d="M771.77 72.79V74.16M772.58 70.43V72.00" stroke="#ece064"/><path d="M773.38 67.72V71.77" stroke="#e60000"/><path d="M774.19 67.40V71.51" stroke="#0a72e0"/><path d="M774.99 64.28V68.58" stroke="#e60000"/><path d="M775.80 65.97V67.40" stroke="#ece064"/><path d="M776.60 64.05V67.00M777.41 63.24V66.87" stroke="#e60000"/><path d="M778.21 63.13V64.30M779.02 64.68V66.15" stroke="#ece064"/><path d="M779.82 63.89V67.18" stroke="#0a72e0"/><path d="M780.63 65.89V67.67" stroke="#ece064"/><path d="M781.43 65.66V69.14M782.24 67.96V71.43" stroke="#0a72e0"/><path d="M783.04 68.70V70.47" stroke="#ece064"/><path d="M783.85 68.85V71.26" stroke="#0a72e0"/><path d="M784.65 67.88V69.58M785.46 70.83V72.45" stroke="#ece064"/><path d="M786.26 70.95V72.87" stroke="#0a72e0"/><path d="M787.07 70.34V73.92M787.87 67.19V71.24M788.68 67.86V71.02" stroke="#e60000"/><path d="M789.48 66.15V69.08M790.29 65.67V68.11" stroke="#0a72e0"/><path d="M791.09 66.81V68.37" stroke="#ece064"/><path d="M791.90 65.54V67.36" stroke="#e60000"/><path d="M792.70 66.26V68.96" stroke="#0a72e0"/><path d="M793.51 65.06V67.63M794.31 67.01V68.74" stroke="#e60000"/><path d="M795.12 65.77V67.34" stroke="#0a72e0"/><path d="M795.92 65.39V68.50" stroke="#e60000"/><path d="M796.73 67.49V68.64" stroke="#ece064"/><path d="M797.53 67.61V69.99M798.34 67.53V69.85" stroke="#0a72e0"/><path d="M799.14 66.02V68.34M799.95 63.92V67.94" stroke="#e60000"/><path d="M800.75 64.99V66.34" stroke="#ece064"/><path d="M801.56 59.35V63.42M802.36 60.06V62.84" stroke="#e60000"/><path d="M803.17 59.91V62.65" stroke="#0a72e0"/><path d="M803.97 60.52V63.11M804.78 61.93V64.01M805.58 60.48V62.47M806.39 60.58V62.07M807.19 60.11V62.70" stroke="#e60000"/><path d="M808.00 60.00V62.62M808.80 60.31V64.01M809.61 61.41V64.80M810.41 61.61V64.73M811.22 62.57V65.79M812.02 65.57V67.98" stroke="#0a72e0"/><path d="M812.83 65.21V67.65" stroke="#e60000"/><path d="M813.63 65.55V68.36M814.44 65.79V69.87" stroke="#0a72e0"/><path d="M815.24 68.90V70.05" stroke="#ece064"/><path d="M816.05 68.23V72.53" stroke="#e60000"/><path d="M816.85 71.99V74.32" stroke="#0a72e0"/><path d="M817.66 71.14V72.92" stroke="#e60000"/><path d="M818.46 70.63V71.95M819.27 70.00V71.44" stroke="#ece064"/><path d="M820.07 69.91V71.79" stroke="#e60000"/><path d="M820.88 69.04V70.26" stroke="#ece064"/><path d="M821.68 68.00V69.93M822.49 67.25V69.57M823.29 69.49V72.69M824.10 70.51V73.75M824.90 71.17V73.23M825.71 72.10V74.03" stroke="#0a72e0"/><path d="M826.51 71.43V73.05" stroke="#e60000"/><path d="M827.32 73.58V75.01M828.12 71.20V74.06M828.93 72.90V76.87M829.73 73.30V77.49M830.54 76.06V80.71" stroke="#0a72e0"/><path d="M831.34 78.34V79.92M832.15 81.07V82.21M832.95 78.83V80.11" stroke="#ece064"/><path d="M833.76 76.30V80.16" stroke="#0a72e0"/><path d="M834.56 76.31V78.15" stroke="#e60000"/><path d="M835.37 76.43V77.75" stroke="#0a72e0"/><path d="M836.17 76.62V78.42" stroke="#e60000"/><path d="M836.98 76.20V77.79M837.78 78.57V80.09" stroke="#ece064"/><path d="M838.59 78.36V82.35" stroke="#0a72e0"/><path d="M839.39 79.78V81.57" stroke="#ece064"/><path d="M840.20 80.85V83.08" stroke="#e60000"/><path d="M841.00 80.75V82.22M841.81 82.83V84.24" stroke="#ece064"/><path d="M842.61 79.00V82.17" stroke="#e60000"/><path d="M843.42 78.08V81.08" stroke="#0a72e0"/><path d="M844.22 79.49V81.08" stroke="#ece064"/><path d="M845.03 79.66V83.28M845.83 80.54V84.39M846.64 80.71V84.65" stroke="#0a72e0"/><path d="M847.44 83.07V84.80" stroke="#ece064"/><path d="M848.25 83.80V87.48" stroke="#0a72e0"/><path d="M849.05 84.57V86.09" stroke="#ece064"/><path d="M849.86 86.31V88.66" stroke="#0a72e0"/><path d="M851.47 87.73V89.37" stroke="#ece064"/><path d="M852.27 86.81V91.31" stroke="#0a72e0"/><path d="M853.88 93.18V94.36" stroke="#ece064"/><path d="M855.49 87.20V90.92M856.30 88.77V90.73" stroke="#e60000"/><path d="M857.10 89.76V91.50" stroke="#ece064"/><path d="M859.52 89.57V91.68M860.32 90.69V91.75" stroke="#e60000"/><path d="M861.13 91.53V93.32" stroke="#ece064"/><path d="M861.93 91.21V93.60" stroke="#e60000"/><path d="M862.74 90.32V91.76" stroke="#ece064"/><path d="M863.54 90.70V92.86" stroke="#0a72e0"/><path d="M864.35 86.83V90.58" stroke="#e60000"/><path d="M865.15 88.11V89.78M865.96 87.37V88.58" stroke="#ece064"/><path d="M867.57 85.30V88.53M868.37 85.05V87.80M869.18 83.55V85.55" stroke="#e60000"/><path d="M871.59 82.74V84.42" stroke="#ece064"/><path d="M874.01 87.01V90.43" stroke="#0a72e0"/><path d="M874.81 89.42V90.71M875.62 89.60V91.24M876.42 89.97V91.74M878.03 91.48V93.26M878.84 90.47V91.71M879.64 91.15V92.69M880.45 92.63V94.39M881.25 91.71V93.41M882.06 91.81V93.58" stroke="#ece064"/><path d="M882.86 93.64V95.80" stroke="#e60000"/><path d="M883.67 94.18V95.86" stroke="#ece064"/><path d="M884.47 94.62V98.17" stroke="#0a72e0"/><path d="M885.28 95.53V96.93M886.89 96.72V97.82" stroke="#ece064"/><path d="M887.69 97.53V99.76M888.50 96.31V99.59" stroke="#e60000"/><path d="M889.30 98.82V100.59" stroke="#ece064"/><path d="M890.11 97.57V100.67" stroke="#e60000"/><path d="M891.72 100.12V101.47" stroke="#ece064"/><path d="M892.52 99.05V102.53M893.33 100.36V103.24" stroke="#0a72e0"/><path d="M894.94 103.10V104.31M895.74 99.98V101.44M896.55 97.63V99.02" stroke="#ece064"/><path d="M897.29 85.98V95.08" stroke="#e60000"/><path d="M897.35 95.14V96.40M898.16 88.39V90.06M898.96 87.81V89.14M899.77 87.68V89.25M901.38 86.22V87.44M902.18 86.83V88.16M902.99 85.46V86.92M904.60 84.08V85.39M905.40 86.11V87.33M906.21 84.84V86.53M907.01 86.56V88.01M907.82 86.82V88.44" stroke="#ece064"/><path d="M908.62 85.37V87.41" stroke="#0a72e0"/><path d="M909.43 85.67V87.90" stroke="#e60000"/><path d="M910.23 86.35V89.54M911.04 87.55V91.41" stroke="#0a72e0"/><path d="M911.84 89.43V90.91M914.26 94.01V95.45" stroke="#ece064"/><path d="M915.06 93.21V97.48" stroke="#0a72e0"/><path d="M916.67 96.45V97.89M917.48 97.08V98.86" stroke="#ece064"/><path d="M918.28 96.87V97.93" stroke="#0a72e0"/><path d="M919.09 98.10V100.43M919.89 96.74V99.94" stroke="#e60000"/><path d="M920.70 95.93V99.14" stroke="#0a72e0"/><path d="M921.50 94.77V98.09" stroke="#e60000"/><path d="M922.31 94.34V95.69" stroke="#ece064"/><path d="M924.72 87.40V91.58M925.53 88.14V90.78" stroke="#e60000"/><path d="M926.33 86.78V88.11M927.14 86.06V87.35M927.94 86.88V88.27M928.75 87.08V88.72" stroke="#ece064"/><path d="M929.55 86.77V88.87" stroke="#e60000"/><path d="M931.16 84.77V86.37" stroke="#ece064"/><path d="M932.77 85.55V87.23" stroke="#e60000"/><path d="M933.58 84.92V86.58" stroke="#0a72e0"/><path d="M934.38 84.76V87.40" stroke="#e60000"/><path d="M935.19 84.05V85.41" stroke="#ece064"/><path d="M935.99 82.29V85.44" stroke="#e60000"/><path d="M938.41 79.07V83.65" stroke="#0a72e0"/><path d="M939.21 86.30V87.74" stroke="#ece064"/><path d="M939.32 87.64V95.08M940.02 90.12V94.61M940.82 89.86V92.91" stroke="#0a72e0"/><path d="M941.63 93.51V95.20M943.24 91.05V92.70M944.04 92.40V93.78M944.85 92.74V93.85M945.65 92.18V93.81" stroke="#ece064"/><path d="M946.46 92.98V94.92" stroke="#0a72e0"/><path d="M947.26 93.05V94.29M949.68 92.30V93.80M950.48 94.83V96.35M951.29 95.57V96.82" stroke="#ece064"/><path d="M952.09 94.71V97.42M952.90 95.66V97.76M953.70 96.29V98.35M954.51 95.44V97.31" stroke="#e60000"/><path d="M955.31 94.62V97.03" stroke="#0a72e0"/><path d="M956.12 95.79V97.07M956.92 95.13V96.55M957.73 98.66V99.82M958.53 97.51V98.81M959.34 98.56V100.35M960.14 97.48V99.18" stroke="#ece064"/><path d="M960.95 96.22V99.88" stroke="#e60000"/><path d="M961.75 94.91V96.68M962.56 93.11V94.67" stroke="#ece064"/><path d="M963.36 93.82V96.63" stroke="#0a72e0"/><path d="M964.97 96.62V97.83M965.78 94.24V95.51M966.58 92.53V94.21M967.39 92.72V94.49" stroke="#ece064"/><path d="M968.19 91.54V94.57M969.00 90.59V94.47" stroke="#e60000"/><path d="M969.80 90.94V92.16" stroke="#ece064"/></g>
</g>
<g clip-path="url(#cp1)">
<g stroke-width="0.79" fill="none"><path d="M10.60 285.89V287.21M20.53 284.23V285.56M29.63 287.21V288.54M36.25 285.89V287.21M38.73 285.89V287.21" stroke="#ece064"/><path d="M47.98 277.12V284.57" stroke="#e60000"/><path d="M48.39 280.19V281.63M49.19 281.95V283.27" stroke="#ece064"/><path d="M50.00 280.23V282.58" stroke="#e60000"/><path d="M50.47 271.33V291.18" stroke="#0a72e0"/><path d="M50.80 280.11V285.07M51.61 270.13V277.42M52.12 258.09V274.64" stroke="#e60000"/><path d="M52.41 267.19V268.95" stroke="#ece064"/><path d="M53.22 261.04V270.15" stroke="#e60000"/><path d="M53.44 260.57V272.98" stroke="#0a72e0"/><path d="M54.02 263.46V265.18" stroke="#ece064"/><path d="M54.83 263.41V270.94" stroke="#0a72e0"/><path d="M55.63 264.20V272.07" stroke="#e60000"/><path d="M56.44 271.76V272.97" stroke="#ece064"/><path d="M57.24 269.00V278.11M58.05 271.29V279.15" stroke="#0a72e0"/><path d="M58.85 274.48V277.04M59.66 271.42V277.28M60.46 269.69V277.00M61.27 267.43V276.20M62.07 266.71V276.13" stroke="#e60000"/><path d="M62.88 266.77V268.39" stroke="#ece064"/><path d="M63.68 263.22V269.74M64.49 264.01V266.59M65.29 262.87V265.37M66.10 263.51V266.02M66.90 261.52V265.30M67.71 260.40V264.27" stroke="#e60000"/><path d="M68.51 259.79V261.65M69.32 260.26V265.31M70.12 265.20V269.36" stroke="#0a72e0"/><path d="M70.93 267.09V268.34" stroke="#ece064"/><path d="M71.73 268.93V272.02" stroke="#e60000"/><path d="M72.54 270.53V272.29" stroke="#0a72e0"/><path d="M73.34 269.91V271.66" stroke="#ece064"/><path d="M74.15 269.20V271.06" stroke="#e60000"/><path d="M74.95 267.25V269.91" stroke="#0a72e0"/><path d="M75.76 267.91V272.71" stroke="#e60000"/><path d="M76.56 271.76V273.25" stroke="#ece064"/><path d="M77.37 273.44V276.95" stroke="#e60000"/><path d="M78.17 275.41V276.57" stroke="#ece064"/><path d="M78.98 274.07V278.46" stroke="#0a72e0"/><path d="M79.78 277.83V279.08" stroke="#ece064"/><path d="M80.59 276.82V281.81" stroke="#0a72e0"/><path d="M81.39 280.56V282.19" stroke="#ece064"/><path d="M82.20 280.63V284.59" stroke="#e60000"/><path d="M83.00 280.92V284.05M83.81 282.32V283.98" stroke="#0a72e0"/><path d="M84.61 281.91V284.40" stroke="#e60000"/><path d="M85.42 280.29V281.65" stroke="#ece064"/><path d="M86.22 279.08V282.89" stroke="#e60000"/><path d="M87.03 279.87V281.18" stroke="#ece064"/><path d="M87.83 275.51V280.13M88.64 274.75V278.82" stroke="#e60000"/><path d="M89.44 274.87V276.44" stroke="#ece064"/><path d="M90.25 273.87V276.37" stroke="#e60000"/><path d="M91.05 272.71V274.46M91.86 272.68V274.05" stroke="#ece064"/><path d="M92.66 270.85V273.56M93.47 271.27V274.61" stroke="#e60000"/><path d="M94.27 270.09V272.95" stroke="#0a72e0"/><path d="M95.08 270.03V271.45M95.88 269.25V270.65" stroke="#ece064"/><path d="M96.69 267.09V269.65" stroke="#e60000"/><path d="M97.49 268.16V269.66" stroke="#ece064"/><path d="M98.30 269.15V273.87" stroke="#0a72e0"/><path d="M99.10 272.31V274.05M99.91 273.68V275.04" stroke="#ece064"/><path d="M100.71 275.12V276.95" stroke="#e60000"/><path d="M101.52 274.79V276.25" stroke="#ece064"/><path d="M102.32 274.64V276.91" stroke="#0a72e0"/><path d="M103.13 274.76V278.33" stroke="#e60000"/><path d="M103.93 275.81V278.29M104.74 276.20V279.24M105.54 276.39V279.55" stroke="#0a72e0"/><path d="M106.35 278.66V280.33M107.15 280.81V281.99M107.96 278.06V279.45" stroke="#ece064"/><path d="M108.76 277.93V280.69M110.37 277.83V281.13M111.18 280.40V282.85M111.98 279.92V282.87" stroke="#0a72e0"/><path d="M112.79 281.66V283.22" stroke="#ece064"/><path d="M113.59 280.43V282.75" stroke="#e60000"/><path d="M115.20 282.57V285.34M116.01 283.38V284.59" stroke="#0a72e0"/><path d="M116.81 281.86V284.95M117.62 281.69V285.21M118.42 280.76V283.10" stroke="#e60000"/><path d="M119.23 280.99V283.70" stroke="#0a72e0"/><path d="M120.03 283.42V284.63M120.84 283.76V284.97M121.64 285.39V287.08" stroke="#ece064"/><path d="M122.45 285.89V289.80" stroke="#0a72e0"/><path d="M123.25 286.79V291.00" stroke="#e60000"/><path d="M124.06 291.37V292.65M124.86 289.17V290.76M125.67 288.28V290.06" stroke="#ece064"/><path d="M126.47 288.90V290.93M127.28 290.33V293.73" stroke="#0a72e0"/><path d="M128.08 291.35V292.82" stroke="#ece064"/><path d="M128.89 290.87V294.29M129.69 292.50V295.48" stroke="#0a72e0"/><path d="M130.50 292.60V293.77" stroke="#ece064"/><path d="M131.30 294.47V296.63M132.11 294.38V296.52" stroke="#0a72e0"/><path d="M132.91 293.21V294.75" stroke="#ece064"/><path d="M133.72 293.45V294.93" stroke="#e60000"/><path d="M134.52 293.35V296.59" stroke="#0a72e0"/><path d="M135.33 292.89V294.67M136.13 290.25V291.66" stroke="#ece064"/><path d="M136.94 287.22V291.95M137.74 287.04V290.52M138.55 285.38V288.81M140.16 285.09V288.70" stroke="#e60000"/><path d="M140.96 280.52V285.59" stroke="#0a72e0"/><path d="M141.77 280.49V284.93M142.57 278.22V281.29" stroke="#e60000"/><path d="M143.38 279.30V280.91" stroke="#ece064"/><path d="M144.18 279.12V282.48" stroke="#0a72e0"/><path d="M144.99 280.83V282.55" stroke="#ece064"/><path d="M145.79 279.07V282.13" stroke="#0a72e0"/><path d="M146.60 278.42V283.19M147.40 274.96V279.46M148.21 275.65V279.03M149.01 273.90V277.10" stroke="#e60000"/><path d="M149.82 272.14V274.15" stroke="#0a72e0"/><path d="M150.62 273.37V275.94" stroke="#e60000"/><path d="M151.43 273.36V274.72" stroke="#ece064"/><path d="M152.23 272.80V274.60" stroke="#e60000"/><path d="M153.84 272.42V274.77" stroke="#0a72e0"/><path d="M154.65 273.36V274.85" stroke="#ece064"/><path d="M155.45 275.16V277.37" stroke="#e60000"/><path d="M156.26 274.75V277.59" stroke="#0a72e0"/><path d="M157.06 275.76V277.09" stroke="#ece064"/><path d="M157.87 276.57V279.02" stroke="#0a72e0"/><path d="M158.67 276.93V280.27" stroke="#e60000"/><path d="M159.48 278.30V280.05" stroke="#0a72e0"/><path d="M160.28 280.02V282.23M161.09 276.08V279.46M161.89 274.76V278.33" stroke="#e60000"/><path d="M162.70 275.16V276.64" stroke="#ece064"/><path d="M163.50 275.61V277.46M164.31 276.13V278.68" stroke="#0a72e0"/><path d="M165.11 277.24V278.88M165.92 277.21V278.55M166.72 275.42V276.57M167.53 275.27V276.54" stroke="#ece064"/><path d="M168.33 272.29V276.22M169.14 269.87V274.26M169.94 269.85V273.04" stroke="#e60000"/><path d="M170.75 269.32V270.65" stroke="#ece064"/><path d="M171.55 270.05V272.10" stroke="#e60000"/><path d="M172.36 270.07V272.21" stroke="#0a72e0"/><path d="M173.16 268.39V269.56" stroke="#ece064"/><path d="M173.97 269.09V271.60M174.77 269.30V271.56M175.58 269.53V271.52" stroke="#0a72e0"/><path d="M176.38 269.97V271.38" stroke="#ece064"/><path d="M177.19 271.87V274.35M177.99 270.04V272.25M178.80 270.91V272.74" stroke="#0a72e0"/><path d="M179.60 270.58V272.21" stroke="#ece064"/><path d="M180.41 270.21V271.57" stroke="#0a72e0"/><path d="M182.02 271.91V273.30" stroke="#ece064"/><path d="M182.82 271.98V275.65M183.63 265.96V270.48" stroke="#e60000"/><path d="M185.24 259.86V261.62" stroke="#ece064"/><path d="M186.04 254.80V259.05M186.85 253.28V256.72" stroke="#e60000"/><path d="M187.65 254.58V255.93" stroke="#ece064"/><path d="M190.07 255.17V257.47M190.87 255.01V257.46" stroke="#0a72e0"/><path d="M193.29 258.20V259.18" stroke="#e60000"/><path d="M194.09 257.20V258.82M194.90 256.49V257.72" stroke="#ece064"/><path d="M195.70 256.33V258.85" stroke="#e60000"/><path d="M196.51 255.79V257.75M197.31 254.68V257.49" stroke="#0a72e0"/><path d="M198.12 257.71V259.40" stroke="#ece064"/><path d="M198.92 257.78V261.19" stroke="#0a72e0"/><path d="M200.53 259.34V260.94" stroke="#ece064"/><path d="M201.34 259.94V262.81M202.95 255.25V259.91M203.75 253.77V257.16" stroke="#e60000"/><path d="M205.36 253.78V255.42" stroke="#ece064"/><path d="M206.17 252.26V254.37M206.97 252.37V255.11M207.78 250.69V253.56" stroke="#e60000"/><path d="M208.58 251.67V253.01M210.19 251.29V252.91M211.00 250.33V251.61M211.80 249.28V251.00M213.41 250.43V251.71M215.83 250.41V251.74M216.63 250.36V252.04M217.44 252.73V254.46M218.24 250.70V251.88M219.05 248.90V250.40" stroke="#ece064"/><path d="M219.85 244.94V249.32" stroke="#e60000"/><path d="M222.27 243.97V248.05" stroke="#0a72e0"/><path d="M223.88 250.87V255.75" stroke="#e60000"/><path d="M224.68 252.49V254.18M225.49 249.80V251.34" stroke="#ece064"/><path d="M226.29 248.87V252.75" stroke="#e60000"/><path d="M227.10 248.69V250.16" stroke="#ece064"/><path d="M227.90 245.90V250.54" stroke="#e60000"/><path d="M229.51 243.39V246.99" stroke="#0a72e0"/><path d="M230.32 242.95V247.13" stroke="#e60000"/><path d="M231.93 239.16V240.85M234.34 236.63V238.40M235.15 237.17V238.75" stroke="#ece064"/><path d="M235.95 234.95V237.76" stroke="#e60000"/><path d="M236.76 236.31V239.95" stroke="#0a72e0"/><path d="M237.56 236.68V241.59" stroke="#e60000"/><path d="M238.37 238.23V241.59" stroke="#0a72e0"/><path d="M240.78 243.91V245.66M241.59 242.57V243.69M243.20 243.31V244.51" stroke="#ece064"/><path d="M245.61 241.20V243.84M246.42 240.54V243.05" stroke="#e60000"/><path d="M247.22 239.58V241.99" stroke="#0a72e0"/><path d="M248.03 239.43V241.23" stroke="#e60000"/><path d="M248.83 238.10V239.82M249.64 239.36V240.63" stroke="#ece064"/><path d="M250.44 238.93V242.24" stroke="#0a72e0"/><path d="M252.05 242.21V243.54M252.86 245.40V247.14" stroke="#ece064"/><path d="M253.66 246.51V250.85" stroke="#0a72e0"/><path d="M255.27 247.68V249.20M256.88 246.79V248.47" stroke="#ece064"/><path d="M259.30 244.97V247.78M260.91 247.33V250.34M261.71 247.31V248.97" stroke="#0a72e0"/><path d="M262.52 248.02V249.42M263.32 248.26V249.62M264.93 249.33V250.94M265.74 247.71V248.98" stroke="#ece064"/><path d="M266.54 246.40V249.97M267.35 245.10V247.78M268.15 245.09V246.81M268.96 245.58V247.76M269.76 247.22V249.97" stroke="#0a72e0"/><path d="M270.57 248.27V249.94M271.37 247.81V249.54M272.98 248.77V250.05M275.40 248.72V250.06" stroke="#ece064"/><path d="M276.20 247.20V249.81" stroke="#e60000"/><path d="M277.01 249.03V251.57M277.81 249.82V252.15" stroke="#0a72e0"/><path d="M278.62 250.95V252.45" stroke="#ece064"/><path d="M279.42 248.36V251.24" stroke="#e60000"/><path d="M280.23 248.88V250.53" stroke="#ece064"/><path d="M281.03 245.82V248.97" stroke="#e60000"/><path d="M281.84 246.63V247.96" stroke="#ece064"/><path d="M282.64 244.16V247.41M284.25 243.08V245.69" stroke="#e60000"/><path d="M285.06 244.75V245.95" stroke="#ece064"/><path d="M286.67 244.78V246.95M287.47 246.34V247.61" stroke="#0a72e0"/><path d="M289.08 247.02V248.31M289.89 247.05V248.33M290.69 246.03V247.38M294.72 245.59V246.87" stroke="#ece064"/><path d="M295.52 244.88V246.65" stroke="#e60000"/><path d="M296.33 246.49V247.63" stroke="#ece064"/><path d="M297.94 243.97V247.55" stroke="#e60000"/><path d="M298.74 243.85V245.09" stroke="#ece064"/><path d="M301.16 238.85V240.92M301.96 239.38V241.02M302.77 238.90V240.51" stroke="#e60000"/><path d="M303.57 238.14V239.85M304.38 237.85V239.12" stroke="#ece064"/><path d="M305.18 237.14V238.94" stroke="#0a72e0"/><path d="M305.99 238.34V239.76" stroke="#e60000"/><path d="M306.79 237.29V238.59" stroke="#ece064"/><path d="M309.21 234.49V237.77" stroke="#e60000"/><path d="M310.01 234.85V236.06M310.82 233.96V235.33" stroke="#ece064"/><path d="M311.62 232.77V235.13M315.65 229.10V231.95" stroke="#e60000"/><path d="M316.45 230.16V231.54M317.26 228.63V230.23" stroke="#ece064"/><path d="M320.00 219.89V229.82M320.48 221.73V225.83M321.28 219.99V224.78" stroke="#e60000"/><path d="M322.09 217.47V221.49" stroke="#0a72e0"/><path d="M323.70 215.94V219.90M324.50 214.08V217.13M325.31 214.42V218.23M326.11 212.05V214.25" stroke="#e60000"/><path d="M327.72 212.89V214.46" stroke="#ece064"/><path d="M328.53 213.98V217.07M329.33 213.28V217.36" stroke="#e60000"/><path d="M330.94 215.77V220.19M331.75 218.54V223.08M332.55 220.07V224.73M333.36 220.83V225.22M334.16 223.44V227.07" stroke="#0a72e0"/><path d="M334.97 225.49V226.83" stroke="#ece064"/><path d="M335.77 226.07V228.50" stroke="#0a72e0"/><path d="M336.58 226.44V227.94M337.38 228.54V230.28" stroke="#ece064"/><path d="M338.19 230.47V234.80M338.99 230.15V235.09" stroke="#0a72e0"/><path d="M339.80 235.81V237.15" stroke="#ece064"/><path d="M340.60 232.55V236.76" stroke="#0a72e0"/><path d="M341.41 238.79V240.08" stroke="#ece064"/><path d="M342.21 237.47V241.46M343.02 239.03V242.46" stroke="#0a72e0"/><path d="M343.82 240.38V241.81M344.63 241.82V243.52M347.04 244.52V246.13M348.65 247.26V248.61" stroke="#ece064"/><path d="M349.46 246.30V250.18M350.26 243.01V248.27M351.07 240.63V245.91M351.44 236.44V242.23" stroke="#e60000"/><path d="M352.68 240.26V243.22" stroke="#0a72e0"/><path d="M354.29 245.57V247.07" stroke="#ece064"/><path d="M355.09 245.30V249.47M355.24 240.57V252.16M356.70 244.14V248.39" stroke="#0a72e0"/><path d="M357.51 241.63V246.52" stroke="#e60000"/><path d="M358.31 242.35V243.94M359.12 239.74V240.89" stroke="#ece064"/><path d="M359.71 232.30V243.88" stroke="#e60000"/><path d="M360.73 240.27V244.91M361.37 248.85V263.74M361.53 251.31V256.23M362.34 255.55V259.73M363.95 257.84V260.81M365.56 260.65V262.52" stroke="#0a72e0"/><path d="M366.36 261.37V263.63" stroke="#e60000"/><path d="M367.17 262.79V263.89" stroke="#ece064"/><path d="M367.97 260.91V262.91M368.78 262.65V264.73" stroke="#0a72e0"/><path d="M369.58 264.52V265.78" stroke="#ece064"/><path d="M370.39 264.33V268.46M371.19 266.03V271.05M372.00 270.18V274.22M372.80 272.77V276.85M373.61 274.24V278.99" stroke="#0a72e0"/><path d="M374.41 276.41V277.84" stroke="#ece064"/><path d="M375.22 279.32V282.81M376.02 277.17V281.16M377.63 281.49V285.27" stroke="#0a72e0"/><path d="M378.44 280.06V287.42" stroke="#e60000"/><path d="M379.24 283.49V290.12" stroke="#0a72e0"/><path d="M380.05 287.93V289.33" stroke="#ece064"/><path d="M380.39 290.00V319.78" stroke="#0a72e0"/><path d="M380.85 290.21V291.91" stroke="#ece064"/><path d="M381.66 290.76V298.86" stroke="#0a72e0"/><path d="M382.46 309.27V310.55" stroke="#ece064"/><path d="M383.27 319.13V325.85M383.70 314.82V340.47" stroke="#0a72e0"/><path d="M384.07 330.74V332.39" stroke="#ece064"/><path d="M384.88 328.51V331.28M386.49 323.75V330.47M387.29 319.72V327.10M387.84 314.82V329.71" stroke="#e60000"/><path d="M388.10 321.91V323.25M388.90 314.91V316.69" stroke="#ece064"/><path d="M389.71 305.69V314.05M389.82 300.75V309.86M390.51 303.46V309.17" stroke="#e60000"/><path d="M391.32 306.12V312.59" stroke="#0a72e0"/><path d="M392.12 310.17V311.50" stroke="#ece064"/><path d="M392.93 308.67V315.78M394.54 311.20V316.31M395.34 312.50V317.51" stroke="#0a72e0"/><path d="M396.15 315.70V317.50" stroke="#ece064"/><path d="M396.95 314.16V321.78M397.76 316.95V324.31M398.56 320.53V327.34" stroke="#0a72e0"/><path d="M399.37 321.60V328.35" stroke="#e60000"/><path d="M400.17 326.85V328.45" stroke="#ece064"/><path d="M400.98 325.90V329.30" stroke="#e60000"/><path d="M401.78 323.28V332.13M402.59 327.22V333.99M403.23 333.02V349.57M403.39 333.91V342.06M404.20 337.54V344.17" stroke="#0a72e0"/><path d="M405.81 338.67V342.36M406.61 337.48V341.95M407.42 335.77V341.58M408.22 334.32V340.99" stroke="#e60000"/><path d="M409.03 334.50V335.77" stroke="#ece064"/><path d="M409.83 327.68V336.26M410.64 327.30V334.69M411.44 325.07V333.17" stroke="#e60000"/><path d="M412.25 323.89V329.71" stroke="#0a72e0"/><path d="M413.05 324.35V328.51" stroke="#e60000"/><path d="M413.86 324.79V333.64M414.66 326.18V332.63" stroke="#0a72e0"/><path d="M415.47 331.70V332.90" stroke="#ece064"/><path d="M416.27 330.40V335.26" stroke="#0a72e0"/><path d="M417.08 331.36V334.45" stroke="#e60000"/><path d="M417.88 331.64V332.98M418.69 331.60V333.11M419.49 331.42V332.59" stroke="#ece064"/><path d="M420.30 330.29V334.87M421.10 330.84V336.05M421.91 329.53V336.72M422.71 331.52V340.46M423.52 334.69V343.18M424.32 340.75V348.40M425.07 346.26V362.80M425.13 346.16V353.42" stroke="#0a72e0"/><path d="M425.89 349.57V363.63" stroke="#e60000"/><path d="M425.93 348.47V356.17M426.74 354.43V361.31" stroke="#0a72e0"/><path d="M427.54 359.30V360.52" stroke="#ece064"/><path d="M428.35 358.38V362.96M429.15 360.72V362.92M429.96 359.77V361.55" stroke="#0a72e0"/><path d="M430.76 361.40V362.76" stroke="#ece064"/><path d="M431.57 357.10V361.71" stroke="#e60000"/><path d="M432.37 358.66V364.74" stroke="#0a72e0"/><path d="M433.18 358.65V367.05" stroke="#e60000"/><path d="M433.98 362.61V371.43M434.17 362.80V377.69M434.79 366.91V374.19" stroke="#0a72e0"/><path d="M436.40 369.28V370.93" stroke="#ece064"/><path d="M437.20 364.54V368.69M438.01 365.53V369.98" stroke="#e60000"/><path d="M438.81 365.33V366.78M439.62 365.17V366.88" stroke="#ece064"/><path d="M440.42 361.47V367.73M441.23 358.61V366.24M442.03 357.98V366.48M442.84 354.35V362.00" stroke="#e60000"/><path d="M443.64 356.33V357.93" stroke="#ece064"/><path d="M444.45 352.05V360.91" stroke="#0a72e0"/><path d="M445.25 350.94V358.18M446.06 349.73V354.80" stroke="#e60000"/><path d="M447.67 349.39V357.89M448.47 352.58V359.24M449.28 354.98V362.14" stroke="#0a72e0"/><path d="M450.08 356.61V363.44" stroke="#e60000"/><path d="M450.89 356.35V363.06" stroke="#0a72e0"/><path d="M451.69 360.24V367.98M452.50 362.62V365.51M453.30 361.99V368.44M454.91 358.26V364.08" stroke="#e60000"/><path d="M455.72 360.67V361.92" stroke="#ece064"/><path d="M456.52 358.05V364.50" stroke="#e60000"/><path d="M458.13 361.70V366.76" stroke="#0a72e0"/><path d="M458.94 363.66V369.09" stroke="#e60000"/><path d="M459.74 363.43V368.41" stroke="#0a72e0"/><path d="M460.55 366.80V368.07" stroke="#ece064"/><path d="M461.35 364.65V373.30M462.16 367.15V374.61M462.96 369.90V376.76" stroke="#0a72e0"/><path d="M463.77 370.37V377.02" stroke="#e60000"/><path d="M464.57 373.39V378.64M465.38 374.20V376.82" stroke="#0a72e0"/><path d="M465.94 372.73V379.35M466.18 374.29V378.71M466.99 371.71V379.58M467.79 367.46V374.89M468.60 366.23V373.72" stroke="#e60000"/><path d="M469.40 368.33V369.59" stroke="#ece064"/><path d="M470.21 367.24V371.85" stroke="#0a72e0"/><path d="M471.01 366.62V370.15" stroke="#e60000"/><path d="M471.82 367.89V369.23" stroke="#ece064"/><path d="M472.62 365.72V368.53" stroke="#e60000"/><path d="M473.43 366.94V368.53" stroke="#ece064"/><path d="M474.23 366.46V368.93" stroke="#0a72e0"/><path d="M475.04 368.17V369.36" stroke="#ece064"/><path d="M475.84 365.43V370.06M476.65 365.22V370.93M477.45 361.58V369.05" stroke="#e60000"/><path d="M478.26 361.88V368.08" stroke="#0a72e0"/><path d="M479.06 363.18V364.68" stroke="#ece064"/><path d="M479.87 360.45V365.65M483.09 356.25V361.46" stroke="#e60000"/><path d="M483.89 356.42V358.21" stroke="#ece064"/><path d="M484.70 352.91V357.02M487.11 350.53V352.02M487.92 351.71V353.58" stroke="#e60000"/><path d="M489.53 352.35V353.79" stroke="#ece064"/><path d="M491.94 351.49V353.29" stroke="#0a72e0"/><path d="M493.55 353.29V354.61M495.16 353.77V355.36M495.97 351.98V353.32" stroke="#ece064"/><path d="M496.77 352.49V354.78" stroke="#0a72e0"/><path d="M497.58 352.01V354.24M499.19 350.52V353.05" stroke="#e60000"/><path d="M500.80 350.06V351.77M502.41 350.16V351.88M503.21 350.05V351.50M504.02 353.10V354.67" stroke="#ece064"/><path d="M504.82 354.05V358.07" stroke="#0a72e0"/><path d="M505.63 354.72V355.87M506.43 357.17V358.47" stroke="#ece064"/><path d="M508.04 356.67V359.72" stroke="#0a72e0"/><path d="M510.46 360.10V361.81M512.07 359.81V361.46M514.48 362.64V364.07" stroke="#ece064"/><path d="M516.09 362.75V365.07M517.70 361.95V365.47M519.31 356.39V360.69M520.92 356.92V359.24" stroke="#e60000"/><path d="M522.53 357.54V358.87M523.34 357.09V358.79" stroke="#ece064"/><path d="M524.14 356.15V358.57" stroke="#0a72e0"/><path d="M525.75 358.04V359.24" stroke="#ece064"/><path d="M526.56 358.94V361.93" stroke="#0a72e0"/><path d="M528.17 361.90V364.26" stroke="#e60000"/><path d="M528.97 362.07V363.82" stroke="#0a72e0"/><path d="M529.78 361.57V363.05" stroke="#e60000"/><path d="M530.58 361.78V363.39" stroke="#ece064"/><path d="M531.39 361.00V363.09" stroke="#e60000"/><path d="M537.83 358.13V359.43M539.44 356.40V357.89M541.85 350.05V351.23" stroke="#ece064"/><path d="M542.66 350.25V353.59" stroke="#0a72e0"/><path d="M543.46 352.18V353.41M544.27 352.18V353.84M545.88 353.73V355.29" stroke="#ece064"/><path d="M546.68 355.33V358.34M547.49 356.52V358.38" stroke="#0a72e0"/><path d="M548.29 355.60V356.79" stroke="#ece064"/><path d="M554.73 352.30V355.35M557.15 357.63V362.39" stroke="#0a72e0"/><path d="M557.95 361.50V362.70" stroke="#ece064"/><path d="M558.10 357.95V367.05M558.76 360.12V364.33" stroke="#0a72e0"/><path d="M559.56 362.61V363.90M561.17 359.65V360.81M561.98 355.05V356.72" stroke="#ece064"/><path d="M562.78 351.92V356.71" stroke="#e60000"/><path d="M563.59 351.98V353.57" stroke="#ece064"/><path d="M564.39 349.45V353.53" stroke="#e60000"/><path d="M565.20 349.49V350.62M566.81 345.66V347.41M568.42 344.01V345.50M569.22 343.58V345.08M570.03 341.77V342.98M571.64 340.82V341.92" stroke="#ece064"/><path d="M573.25 337.44V341.40" stroke="#e60000"/><path d="M574.05 341.29V342.79" stroke="#ece064"/><path d="M574.86 341.27V346.13" stroke="#e60000"/><path d="M575.66 336.77V338.35" stroke="#ece064"/><path d="M576.30 328.16V334.78" stroke="#e60000"/><path d="M576.47 328.79V333.76M577.27 331.61V333.31" stroke="#0a72e0"/><path d="M581.30 337.12V338.78M582.91 337.42V338.85" stroke="#ece064"/><path d="M583.71 331.42V336.56M584.52 328.10V332.84" stroke="#e60000"/><path d="M585.32 330.09V331.90" stroke="#0a72e0"/><path d="M586.13 329.76V331.35M588.54 334.05V335.22" stroke="#ece064"/><path d="M589.35 330.74V335.69M590.96 321.66V329.18" stroke="#e60000"/><path d="M591.76 324.35V332.33" stroke="#0a72e0"/><path d="M592.57 329.66V331.10" stroke="#ece064"/><path d="M593.37 327.98V338.48" stroke="#e60000"/><path d="M594.18 333.31V341.69M594.98 335.22V341.74" stroke="#0a72e0"/><path d="M595.79 337.00V341.58" stroke="#e60000"/><path d="M597.40 340.34V341.81" stroke="#ece064"/><path d="M597.81 335.61V351.33" stroke="#e60000"/><path d="M598.20 344.05V345.53" stroke="#ece064"/><path d="M599.01 334.49V342.80M599.81 328.46V336.44M600.29 316.58V338.09M600.62 322.79V332.67" stroke="#e60000"/><path d="M600.83 314.96V334.82M601.28 314.10V344.71M601.42 321.87V330.72" stroke="#0a72e0"/><path d="M602.23 333.33V335.01" stroke="#ece064"/><path d="M602.77 336.44V354.64M603.03 338.49V349.05M603.84 345.04V352.93" stroke="#0a72e0"/><path d="M604.64 352.45V354.08M605.45 355.49V356.92" stroke="#ece064"/><path d="M605.79 351.37V365.43M606.25 354.43V361.92M607.86 347.29V355.56" stroke="#e60000"/><path d="M608.67 344.99V346.23" stroke="#ece064"/><path d="M609.47 343.62V347.66M611.08 347.32V357.07" stroke="#0a72e0"/><path d="M611.89 352.00V353.31M612.69 352.75V354.29" stroke="#ece064"/><path d="M613.50 352.32V362.22M614.06 356.33V367.91M614.30 357.50V362.54" stroke="#0a72e0"/><path d="M615.11 354.03V363.72M615.91 352.09V359.92" stroke="#e60000"/><path d="M617.52 352.71V355.77" stroke="#0a72e0"/><path d="M617.87 349.71V357.98M619.13 356.31V357.98" stroke="#ece064"/><path d="M620.74 359.27V369.41" stroke="#e60000"/><path d="M621.51 364.60V377.84M621.55 364.41V373.51M623.16 372.67V378.27" stroke="#0a72e0"/><path d="M623.96 372.92V375.43M623.99 369.57V381.15M624.77 371.98V377.45M625.57 367.37V375.83" stroke="#e60000"/><path d="M627.18 363.56V371.45M627.99 359.21V367.73M628.13 357.16V364.60M629.60 358.87V366.98" stroke="#0a72e0"/><path d="M630.40 363.13V373.24" stroke="#e60000"/><path d="M631.21 370.92V372.52" stroke="#ece064"/><path d="M632.01 368.38V378.51M632.82 371.39V380.10M633.62 374.60V383.08" stroke="#e60000"/><path d="M634.25 376.18V389.42" stroke="#0a72e0"/><path d="M634.43 380.05V384.47M635.23 375.59V384.27" stroke="#e60000"/><path d="M636.04 372.59V381.12M637.65 372.09V377.18" stroke="#0a72e0"/><path d="M639.26 372.82V378.44" stroke="#e60000"/><path d="M640.06 373.97V378.16M640.87 371.98V378.10M641.67 371.34V381.63" stroke="#0a72e0"/><path d="M642.48 377.14V378.84" stroke="#ece064"/><path d="M644.09 370.85V381.07M646.33 358.81V371.22" stroke="#0a72e0"/><path d="M646.50 361.79V370.30M647.31 360.00V368.11" stroke="#e60000"/><path d="M648.11 362.23V363.89" stroke="#ece064"/><path d="M649.72 358.61V364.02" stroke="#0a72e0"/><path d="M650.53 360.09V361.86" stroke="#ece064"/><path d="M651.33 357.42V363.24M652.14 357.99V366.43" stroke="#0a72e0"/><path d="M652.94 364.90V366.61M653.75 367.09V368.81" stroke="#ece064"/><path d="M654.55 365.17V371.23" stroke="#0a72e0"/><path d="M655.36 367.46V371.27M656.16 364.56V372.95M656.97 359.50V369.22M657.58 354.67V366.26" stroke="#e60000"/><path d="M658.58 359.29V364.87M659.38 360.26V369.95M660.19 363.75V368.97M660.99 360.47V367.14" stroke="#0a72e0"/><path d="M661.80 362.18V363.84" stroke="#ece064"/><path d="M662.60 358.95V367.25" stroke="#0a72e0"/><path d="M663.41 362.51V363.87M664.21 359.62V361.06" stroke="#ece064"/><path d="M665.02 354.12V362.61M665.82 350.41V360.67M666.63 350.65V356.56" stroke="#e60000"/><path d="M668.24 350.30V360.85" stroke="#0a72e0"/><path d="M669.04 354.80V365.32" stroke="#e60000"/><path d="M669.16 356.33V368.74" stroke="#0a72e0"/><path d="M669.85 362.36V363.63" stroke="#ece064"/><path d="M670.65 357.56V363.08" stroke="#e60000"/><path d="M671.46 357.80V364.86" stroke="#0a72e0"/><path d="M672.26 354.40V362.03M673.07 351.80V359.88M673.87 351.91V357.98M674.68 352.46V356.41" stroke="#e60000"/><path d="M675.48 352.92V360.82" stroke="#0a72e0"/><path d="M676.29 356.02V357.57M677.09 357.45V359.14" stroke="#ece064"/><path d="M678.70 357.31V364.71M679.51 353.52V362.85M680.25 345.57V359.64" stroke="#e60000"/><path d="M680.31 353.57V354.89" stroke="#ece064"/><path d="M681.12 346.21V356.38M681.92 341.38V349.65M683.35 329.49V342.73M683.53 334.45V342.56M683.56 328.20V343.09M684.34 329.55V338.94" stroke="#e60000"/><path d="M685.14 333.22V335.02M685.95 329.96V331.55M686.33 327.84V342.73M686.70 329.86V343.09" stroke="#ece064"/><path d="M686.75 332.31V336.00" stroke="#e60000"/><path d="M687.56 332.62V334.27" stroke="#ece064"/><path d="M688.36 325.57V333.58" stroke="#e60000"/><path d="M689.17 326.50V327.96M689.97 324.91V326.63M691.58 324.28V325.67" stroke="#ece064"/><path d="M692.39 318.68V329.15M692.66 314.96V328.20M693.19 317.83V326.00M693.28 314.60V327.84" stroke="#e60000"/><path d="M694.00 318.24V319.55M694.80 314.92V316.50M695.61 313.14V314.58M696.41 311.98V313.13" stroke="#ece064"/><path d="M697.22 306.68V314.80M698.02 301.70V310.22M698.83 300.40V309.78M699.63 294.67V304.58M700.44 298.48V303.89" stroke="#e60000"/><path d="M701.24 298.26V299.48" stroke="#ece064"/><path d="M702.05 298.42V302.19" stroke="#e60000"/><path d="M702.85 299.45V307.80" stroke="#0a72e0"/><path d="M703.66 292.35V300.34M704.20 281.51V301.37" stroke="#e60000"/><path d="M704.46 290.17V291.63" stroke="#ece064"/><path d="M705.27 282.59V290.10M706.88 278.75V284.42" stroke="#e60000"/><path d="M707.68 279.04V280.19" stroke="#ece064"/><path d="M708.49 277.47V284.97" stroke="#0a72e0"/><path d="M709.29 275.02V282.26M709.49 269.93V283.16M710.10 268.90V276.57" stroke="#e60000"/><path d="M710.32 266.62V271.58" stroke="#0a72e0"/><path d="M710.90 266.16V271.39" stroke="#e60000"/><path d="M712.51 274.07V280.75M713.32 273.25V278.45" stroke="#0a72e0"/><path d="M714.12 274.99V276.41M714.93 274.29V276.08M715.73 279.37V280.90M716.54 282.98V284.53" stroke="#ece064"/><path d="M717.34 282.08V288.67M718.15 283.14V287.73" stroke="#0a72e0"/><path d="M719.76 285.06V288.31" stroke="#e60000"/><path d="M720.56 283.75V285.01" stroke="#ece064"/><path d="M721.37 282.50V285.75" stroke="#0a72e0"/><path d="M722.17 285.20V286.83M722.98 287.41V288.64" stroke="#ece064"/><path d="M723.78 286.48V293.32" stroke="#e60000"/><path d="M724.59 290.14V291.41" stroke="#ece064"/><path d="M725.39 292.52V300.26" stroke="#e60000"/><path d="M725.71 289.78V307.98" stroke="#0a72e0"/><path d="M726.20 298.94V300.38M727.00 300.93V302.20" stroke="#ece064"/><path d="M727.81 300.63V308.95" stroke="#e60000"/><path d="M728.61 303.08V308.90" stroke="#0a72e0"/><path d="M729.42 304.14V307.61M730.22 303.15V309.01" stroke="#e60000"/><path d="M731.03 304.12V305.74" stroke="#ece064"/><path d="M731.83 297.80V306.19M732.64 293.12V299.59" stroke="#e60000"/><path d="M733.44 290.74V292.49" stroke="#ece064"/><path d="M734.25 285.79V292.57" stroke="#e60000"/><path d="M735.05 288.49V290.11" stroke="#ece064"/><path d="M735.86 287.96V296.16M736.66 283.45V290.66" stroke="#e60000"/><path d="M737.29 274.89V286.47" stroke="#ece064"/><path d="M737.47 277.25V284.16" stroke="#0a72e0"/><path d="M738.27 280.15V281.26" stroke="#ece064"/><path d="M739.08 279.18V283.50" stroke="#0a72e0"/><path d="M739.88 278.58V284.09M740.69 281.15V283.89" stroke="#e60000"/><path d="M740.93 276.55V289.78" stroke="#0a72e0"/><path d="M741.49 279.52V286.90" stroke="#e60000"/><path d="M742.30 278.84V279.95" stroke="#ece064"/><path d="M742.59 270.75V283.16M743.10 275.28V278.45M743.91 277.88V285.59" stroke="#e60000"/><path d="M744.71 281.07V285.75" stroke="#0a72e0"/><path d="M745.52 280.42V282.10" stroke="#ece064"/><path d="M746.32 273.19V281.60M746.72 272.41V279.86M747.13 272.68V277.44" stroke="#e60000"/><path d="M747.93 275.50V280.25M748.74 275.29V281.04M749.54 278.16V282.34M750.35 277.72V281.96" stroke="#0a72e0"/><path d="M751.15 279.59V280.96" stroke="#ece064"/><path d="M751.96 280.67V283.07" stroke="#e60000"/><path d="M752.76 279.96V281.51" stroke="#ece064"/><path d="M753.57 276.71V280.47" stroke="#0a72e0"/><path d="M754.37 277.29V283.49" stroke="#e60000"/><path d="M755.18 279.38V284.84" stroke="#0a72e0"/><path d="M755.71 296.31V297.30M755.98 280.68V282.36M757.19 294.82V295.81M758.88 289.16V290.15M759.68 291.54V292.54M760.17 294.82V295.81" stroke="#ece064"/><path d="M761.86 295.22V296.41" stroke="#e60000"/><path d="M763.65 298.59V299.58M764.64 298.59V299.58M767.62 298.79V299.78" stroke="#ece064"/><path d="M767.82 300.78V301.77M768.81 296.51V298.10" stroke="#e60000"/><path d="M769.60 300.68V301.87" stroke="#0a72e0"/><path d="M770.40 303.26V304.25M772.09 301.77V302.76" stroke="#ece064"/><path d="M773.38 298.89V300.08" stroke="#0a72e0"/><path d="M775.06 294.82V295.81" stroke="#ece064"/><path d="M776.06 286.38V289.36M776.50 285.65V289.78" stroke="#e60000"/><path d="M778.74 293.13V294.12M781.32 300.48V301.47M782.01 298.79V299.78M784.50 300.28V301.27" stroke="#ece064"/><path d="M786.48 301.77V305.74" stroke="#e60000"/><path d="M787.97 300.28V301.27M788.76 296.31V297.30M790.45 301.77V302.76M791.44 303.26V304.25M792.24 301.77V302.76M794.92 307.23V308.22" stroke="#ece064"/><path d="M796.41 309.11V310.31" stroke="#0a72e0"/><path d="M797.60 310.41V311.40" stroke="#ece064"/><path d="M798.39 313.19V316.16" stroke="#0a72e0"/><path d="M803.99 314.16V315.48M804.15 315.67V316.66M804.81 312.50V313.83M804.85 312.99V313.98" stroke="#ece064"/><path d="M806.80 317.47V324.75" stroke="#e60000"/><path d="M807.63 317.80V325.08M809.45 319.78V330.37" stroke="#0a72e0"/><path d="M810.11 327.23V330.54" stroke="#ece064"/><path d="M811.76 332.19V341.13" stroke="#e60000"/><path d="M813.09 333.68V335.01" stroke="#ece064"/><path d="M813.91 334.01V335.34" stroke="#e60000"/><path d="M815.57 338.81V342.12" stroke="#0a72e0"/><path d="M817.22 342.29V343.61" stroke="#ece064"/><path d="M817.72 333.85V342.12" stroke="#e60000"/><path d="M819.37 333.68V335.01M823.84 340.96V342.29M825.00 340.96V342.29M826.32 340.96V342.29M827.65 340.96V342.29M830.46 340.96V342.29M831.29 336.99V338.31M832.94 329.88V331.20M834.93 333.68V335.01M835.42 329.88V331.20M837.08 335.67V336.99M838.24 336.16V337.49M839.23 336.99V338.31" stroke="#ece064"/><path d="M843.20 337.32V338.65" stroke="#e60000"/><path d="M844.03 338.48V339.80M844.86 340.96V342.29" stroke="#ece064"/><path d="M846.68 345.43V348.74" stroke="#0a72e0"/><path d="M847.50 348.08V349.40" stroke="#ece064"/><path d="M848.66 351.05V357.01" stroke="#0a72e0"/><path d="M850.32 358.83V360.16M852.80 357.84V363.80" stroke="#ece064"/><path d="M853.13 362.47V363.80M855.61 351.39V352.71" stroke="#e60000"/><path d="M856.44 352.87V356.85M857.76 359.99V362.31" stroke="#0a72e0"/><path d="M858.92 358.00V359.33M860.24 355.19V356.51M861.90 352.21V353.54M862.72 358.00V359.33" stroke="#ece064"/><path d="M863.55 348.08V349.40" stroke="#e60000"/><path d="M864.05 345.76V348.41" stroke="#0a72e0"/><path d="M866.03 351.05V352.38M871.00 351.05V352.38M871.83 354.69V356.02M872.65 358.00V359.33" stroke="#ece064"/><path d="M873.48 361.64V365.62M875.63 368.26V372.90" stroke="#0a72e0"/><path d="M876.13 367.10V368.43" stroke="#e60000"/><path d="M878.94 359.66V360.98" stroke="#ece064"/><path d="M879.77 356.85V358.17" stroke="#e60000"/><path d="M881.75 358.00V359.33M885.06 358.00V359.33M886.22 356.35V357.67M889.20 361.81V363.13M894.16 368.43V369.75M896.64 365.12V366.44M899.95 363.80V365.12M901.11 365.45V366.77M903.76 359.66V360.98M907.07 356.35V357.67" stroke="#ece064"/><path d="M911.54 358.50V359.82" stroke="#e60000"/><path d="M912.36 363.80V365.12M915.67 366.77V368.10" stroke="#ece064"/><path d="M917.00 371.24V372.56" stroke="#0a72e0"/><path d="M919.31 366.77V368.10M922.29 359.66V360.98" stroke="#ece064"/><path d="M923.12 354.86V358.17" stroke="#e60000"/><path d="M929.74 359.66V360.98M930.89 365.12V366.44" stroke="#ece064"/><path d="M935.53 356.85V358.17" stroke="#e60000"/><path d="M938.01 356.85V358.17" stroke="#0a72e0"/><path d="M942.15 358.00V359.33M947.11 355.19V356.51" stroke="#ece064"/><path d="M948.43 355.52V356.85" stroke="#e60000"/><path d="M951.74 358.00V359.33M952.85 360.25V361.75M954.06 361.81V363.13M955.35 363.25V364.75M956.71 365.12V366.44M957.10 365.25V366.75" stroke="#ece064"/><path d="M959.02 363.63V365.95M959.10 364.00V365.50" stroke="#0a72e0"/><path d="M960.85 365.75V367.25" stroke="#ece064"/><path d="M962.85 369.00V370.50" stroke="#0a72e0"/><path d="M966.60 367.75V369.25M969.10 362.75V364.25" stroke="#ece064"/></g>
</g>
<g clip-path="url(#cp2)"><polyline points="6.62 504.72 7.42 505.97 8.22 506.69 9.02 506.23 9.82 505.63 10.62 506.11 11.42 506.20 12.22 505.94 13.02 503.98 13.82 503.24 14.62 503.76 15.42 503.10 16.22 503.15 17.02 502.18 17.82 500.83 18.62 499.98 19.42 500.78 20.22 499.52 21.02 499.72 21.82 499.99 22.62 501.02 23.42 501.15 24.22 500.99 25.02 501.12 25.82 500.87 26.62 500.68 27.42 500.52 28.22 499.96 29.02 498.78 29.82 500.07 30.62 498.83 31.42 500.05 32.22 499.86 33.02 501.21 33.82 500.10 34.62 499.85 35.42 500.75 36.22 498.96 37.02 499.72 37.82 498.79 38.62 499.74 39.42 500.69 40.22 500.70 41.02 500.76 41.82 500.00 42.62 498.78 43.42 499.16 44.22 499.33 45.02 501.73 45.82 501.42 46.62 503.18 47.42 503.91 48.22 504.38 49.02 502.99 49.82 503.06 50.62 500.69 51.42 500.25 52.22 501.70 53.02 503.23 53.82 503.61 54.62 504.91 55.42 505.18 56.22 506.27 57.02 504.83 57.82 504.97 58.62 504.57 59.42 504.71 60.22 505.04 61.02 505.40 61.82 505.86 62.62 506.70 63.42 508.11 64.22 508.86 65.02 509.09 65.82 508.53 66.62 509.18 67.42 510.36 68.22 511.66 69.02 512.92 69.82 514.78 70.62 516.59 71.42 516.24 72.22 516.84 73.02 519.17 73.82 519.29 74.62 520.76 75.42 521.33 76.22 518.69 77.02 519.12 77.82 517.61 78.62 516.03 79.42 515.64 80.22 514.59 81.02 514.42 81.82 515.27 82.62 515.96 83.42 516.52 84.22 516.41 85.02 516.15 85.82 517.10 86.62 516.20 87.42 517.32 88.22 517.59 89.02 516.81 89.82 515.99 90.62 516.39 91.42 516.86 92.22 516.86 93.02 517.38 93.82 516.10 94.62 516.77 95.42 517.25 96.22 516.97 97.02 516.02 97.82 518.04 98.62 518.94 99.42 517.58 100.22 515.88 101.02 515.57 101.82 515.76 102.62 516.85 103.42 515.65 104.22 513.93 105.02 513.29 105.82 510.95 106.62 511.59 107.42 509.87 108.22 509.66 109.02 509.53 109.82 509.01 110.62 507.68 111.42 506.65 112.22 504.69 113.02 504.50 113.82 503.75 114.62 502.99 115.42 502.81 116.22 501.90 117.02 502.52 117.82 502.13 118.62 502.05 119.42 502.67 120.22 503.21 121.02 503.65 121.82 502.70 122.62 502.63 123.42 501.90 124.22 503.91 125.02 504.20 125.82 503.63 126.62 503.34 127.42 502.81 128.22 503.46 129.02 503.36 129.82 504.44 130.62 503.38 131.42 502.81 132.22 501.90 133.02 504.28 133.82 503.93 134.62 503.26 135.42 504.60 136.22 503.99 137.02 507.16 137.82 505.77 138.62 505.06 139.42 504.25 140.22 502.77 141.02 503.79 141.82 503.28 142.62 504.73 143.42 503.09 144.22 502.97 145.02 503.34 145.82 502.89 146.62 500.96 147.42 500.39 148.22 501.51 149.02 502.14 149.82 501.77 150.62 502.56 151.42 502.98 152.22 503.14 153.02 503.84 153.82 504.51 154.62 503.78 155.42 504.10 156.22 502.18 157.02 501.35 157.82 500.08 158.62 499.71 159.42 498.19 160.22 497.30 161.02 498.66 161.82 499.07 162.62 498.66 163.42 498.45 164.22 497.38 165.02 496.36 165.82 496.34 166.62 496.17 167.42 495.84 168.22 495.60 169.02 495.80 169.82 497.72 170.62 499.03 171.42 499.92 172.22 501.64 173.02 501.49 173.82 502.24 174.62 502.50 175.42 501.00 176.22 500.00 177.02 501.56 177.82 501.14 178.62 502.61 179.42 502.09 180.22 502.08 181.02 501.57 181.82 499.86 182.62 501.62 183.42 501.06 184.22 501.40 185.02 502.37 185.82 503.84 186.62 504.08 187.42 503.92 188.22 502.22 189.02 502.55 189.82 501.14 190.62 501.97 191.42 501.93 192.22 500.89 193.02 501.17 193.82 500.88 194.62 501.03 195.42 500.11 196.22 500.27 197.02 500.46 197.82 502.30 198.62 502.50 199.42 501.55 200.22 501.05 201.02 500.30 201.82 500.59 202.62 501.32 203.42 502.21 204.22 502.10 205.02 502.17 205.82 503.16 206.62 502.38 207.42 502.12 208.22 501.97 209.02 502.30 209.82 503.15 210.62 503.30 211.42 504.34 212.22 504.37 213.02 503.82 213.82 503.80 214.62 503.69 215.42 503.65 216.22 504.72 217.02 502.94 217.82 504.09 218.62 503.90 219.42 505.04 220.22 506.79 221.02 508.38 221.82 507.10 222.62 506.27 223.42 505.31 224.22 505.06 225.02 505.24 225.82 504.12 226.62 503.30 227.42 503.59 228.22 504.74 229.02 505.65 229.82 507.44 230.62 506.49 231.42 505.63 232.22 506.20 233.02 505.03 233.82 505.81 234.62 505.83 235.42 504.54 236.22 504.39 237.02 503.67 237.82 503.62 238.62 502.80 239.42 501.41 240.22 502.66 241.02 501.87 241.82 501.37 242.62 500.75 243.42 500.34 244.22 499.65 245.02 500.37 245.82 500.50 246.62 501.99 247.42 503.51 248.22 504.50 249.02 502.82 249.82 501.69 250.62 502.04 251.42 501.01 252.22 501.55 253.02 499.71 253.82 498.04 254.62 498.16 255.42 497.14 256.22 496.36 257.02 497.83 257.82 498.77 258.62 499.45 259.42 500.05 260.22 500.24 261.02 500.53 261.82 500.11 262.62 499.94 263.42 501.26 264.22 500.35 265.02 500.11 265.82 498.71 266.62 499.22 267.42 500.19 268.22 499.56 269.02 501.41 269.82 500.47 270.62 500.58 271.42 499.97 272.22 500.27 273.02 501.13 273.82 500.56 274.62 501.97 275.42 501.33 276.22 502.21 277.02 504.08 277.82 503.88 278.62 504.79 279.42 506.03 280.22 506.65 281.02 505.28 281.82 506.82 282.62 507.86 283.42 507.60 284.22 506.28 285.02 505.55 285.82 505.21 286.62 504.54 287.42 504.83 288.22 504.67 289.02 504.50 289.82 505.72 290.62 505.48 291.42 505.34 292.22 507.34 293.02 506.81 293.82 507.80 294.62 508.61 295.42 509.13 296.22 509.41 297.02 510.47 297.82 511.86 298.62 510.00 299.42 509.94 300.22 510.67 301.02 510.83 301.82 511.21 302.62 510.64 303.42 508.23 304.22 507.99 305.02 508.03 305.82 508.50 306.62 509.20 307.42 508.91 308.22 508.25 309.02 508.14 309.82 507.85 310.62 509.06 311.42 510.26 312.22 510.66 313.02 509.72 313.82 509.00 314.62 509.38 315.42 509.41 316.22 509.25 317.02 509.17 317.82 509.53 318.62 509.54 319.42 510.38 320.22 509.88 321.02 510.71 321.82 510.78 322.62 511.95 323.42 511.66 324.22 512.35 325.02 512.97 325.82 512.69 326.62 510.71 327.42 509.83 328.22 510.00 329.02 508.14 329.82 508.20 330.62 507.18 331.42 507.04 332.22 505.69 333.02 506.69 333.82 505.85 334.62 505.55 335.42 507.11 336.22 506.28 337.02 507.64 337.82 505.70 338.62 505.04 339.42 505.05 340.22 505.94 341.02 505.47 341.82 506.16 342.62 506.09 343.42 504.24 344.22 503.75 345.02 502.49 345.82 501.66 346.62 502.39 347.42 501.90 348.22 501.47 349.02 500.82 349.82 500.18 350.62 502.88 351.42 503.89 352.22 504.35 353.02 505.55 353.82 504.99 354.62 504.23 355.42 502.48 356.22 502.37 357.02 502.46 357.82 502.59 358.62 501.58 359.42 501.52 360.22 504.03 361.02 505.59 361.82 494.53 362.62 494.94 363.42 496.36 364.22 494.59 365.02 496.38 365.82 496.21 366.62 497.73 367.42 497.24 368.22 496.24 369.02 497.80 369.82 497.47 370.62 497.64 371.42 495.85 372.22 495.70 373.02 495.07 373.82 494.52 374.62 493.68 375.42 493.59 376.22 496.21 377.02 496.41 377.82 494.47 378.62 492.59 379.42 490.68 380.22 488.08 381.02 482.15 381.82 477.45 382.62 476.43 383.42 474.57 384.22 475.04 385.02 474.46 385.82 475.50 386.62 476.01 387.42 476.42 388.22 477.35 389.02 479.79 389.82 479.76 390.62 479.88 391.42 479.55 392.22 476.71 393.02 474.72 393.82 476.27 394.62 475.91 395.42 477.77 396.22 476.98 397.02 477.95 397.82 476.21 398.62 475.98 399.42 474.19 400.22 474.55 401.02 474.22 401.82 475.05 402.62 476.95 403.42 477.57 404.22 476.39 405.02 475.15 405.82 474.35 406.62 474.09 407.42 474.15 408.22 471.47 409.02 470.18 409.82 470.56 410.62 470.67 411.42 471.32 412.22 472.54 413.02 473.04 413.82 470.38 414.62 468.24 415.42 465.76 416.22 467.09 417.02 468.09 417.82 468.50 418.62 469.49 419.42 470.97 420.22 472.25 421.02 471.50 421.82 470.74 422.62 469.87 423.42 468.51 424.22 466.62 425.02 466.12 425.82 463.45 426.62 463.07 427.42 463.17 428.22 461.88 429.02 462.44 429.82 461.25 430.62 461.34 431.42 461.16 432.22 460.71 433.02 460.13 433.82 460.55 434.62 458.36 435.42 458.36 436.22 459.78 437.02 460.80 437.82 460.91 438.62 459.80 439.42 461.28 440.22 463.94 441.02 463.96 441.82 463.66 442.62 464.50 443.42 464.67 444.22 466.11 445.02 466.17 445.82 466.69 446.62 466.78 447.42 467.51 448.22 466.31 449.02 466.52 449.82 467.24 450.62 468.20 451.42 469.34 452.22 469.05 453.02 466.57 453.82 467.43 454.62 465.88 455.42 464.90 456.22 465.60 457.02 463.73 457.82 464.62 458.62 463.82 459.42 462.36 460.22 462.75 461.02 462.44 461.82 461.52 462.62 459.06 463.42 458.72 464.22 457.38 465.02 457.16 465.82 459.21 466.62 458.47 467.42 458.71 468.22 459.08 469.02 459.11 469.82 459.22 470.62 459.80 471.42 460.04 472.22 460.01 473.02 460.67 473.82 460.38 474.62 461.47 475.42 460.77 476.22 461.30 477.02 460.68 477.82 460.78 478.62 461.04 479.42 460.12 480.22 461.92 481.02 460.11 481.82 459.66 482.62 459.00 483.42 460.66 484.22 460.92 485.02 460.64 485.82 459.32 486.62 459.40 487.42 459.61 488.22 458.59 489.02 458.20 489.82 458.19 490.62 458.42 491.42 458.41 492.22 457.51 493.02 457.35 493.82 458.87 494.62 458.51 495.42 457.17 496.22 458.13 497.02 457.82 497.82 457.27 498.62 457.49 499.42 456.67 500.22 456.99 501.02 457.29 501.82 457.76 502.62 458.39 503.42 457.15 504.22 455.02 505.02 454.77 505.82 454.47 506.62 455.25 507.42 454.68 508.22 453.98 509.02 452.39 509.82 450.33 510.62 451.23 511.42 450.71 512.22 451.63 513.02 451.44 513.82 453.00 514.62 452.44 515.42 452.18 516.22 452.48 517.02 452.22 517.82 451.27 518.62 450.55 519.42 450.40 520.22 451.97 521.02 453.44 521.82 452.97 522.62 451.65 523.42 452.31 524.22 453.59 525.02 455.64 525.82 455.77 526.62 454.29 527.42 453.72 528.22 453.72 529.02 454.75 529.82 455.28 530.62 454.73 531.42 454.88 532.22 454.32 533.02 454.66 533.82 455.45 534.62 455.26 535.42 455.27 536.22 454.91 537.02 454.21 537.82 454.98 538.62 455.34 539.42 455.85 540.22 458.69 541.02 459.08 541.82 459.00 542.62 458.15 543.42 457.17 544.22 459.07 545.02 457.66 545.82 459.18 546.62 458.91 547.42 460.05 548.22 460.13 549.02 461.03 549.82 461.91 550.62 461.83 551.42 459.65 552.22 459.76 553.02 460.54 553.82 459.94 554.62 461.05 555.42 461.03 556.22 462.60 557.02 463.22 557.82 463.56 558.62 463.02 559.42 462.08 560.22 463.02 561.02 462.92 561.82 464.85 562.62 466.17 563.42 464.65 564.22 462.68 565.02 463.04 565.82 463.10 566.62 462.93 567.42 463.87 568.22 465.22 569.02 464.65 569.82 464.99 570.62 464.65 571.42 463.83 572.22 464.40 573.02 464.47 573.82 463.59 574.62 462.58 575.42 462.19 576.22 464.78 577.02 465.00 577.82 465.06 578.62 465.11 579.42 463.87 580.22 462.72 581.02 462.16 581.82 461.88 582.62 459.50 583.42 459.76 584.22 458.96 585.02 459.53 585.82 459.91 586.62 458.82 587.42 458.18 588.22 457.98 589.02 456.73 589.82 454.97 590.62 457.38 591.42 458.44 592.22 459.61 593.02 458.35 593.82 459.52 594.62 458.35 595.42 460.26 596.22 459.22 597.02 462.00 597.82 462.63 598.62 460.91 599.42 456.44 600.22 452.72 601.02 450.39 601.82 449.06 602.62 447.97 603.42 446.53 604.22 443.95 605.02 445.56 605.82 446.19 606.62 446.24 607.42 446.10 608.22 444.63 609.02 445.88 609.82 443.12 610.62 440.98 611.42 439.84 612.22 438.54 613.02 436.84 613.82 434.83 614.62 435.12 615.42 436.39 616.22 437.22 617.02 441.15 617.82 445.21 618.62 448.01 619.42 444.43 620.22 440.63 621.02 435.65 621.82 431.64 622.62 428.26 623.42 426.76 624.22 426.67 625.02 426.79 625.82 426.70 626.62 428.75 627.42 429.64 628.22 432.42 629.02 433.48 629.82 433.64 630.62 430.87 631.42 428.83 632.22 426.46 633.02 426.43 633.82 426.04 634.62 427.97 635.42 429.03 636.22 429.01 637.02 429.54 637.82 427.99 638.62 426.58 639.42 424.56 640.22 423.27 641.02 423.14 641.82 422.33 642.62 424.89 643.42 424.01 644.22 424.90 645.02 427.82 645.82 430.24 646.62 432.52 647.42 436.04 648.22 437.30 649.02 438.87 649.82 438.80 650.62 437.56 651.42 435.77 652.22 436.23 653.02 436.49 653.82 435.76 654.62 435.31 655.42 434.97 656.22 435.89 657.02 436.79 657.82 439.13 658.62 441.81 659.42 444.13 660.22 444.78 661.02 447.02 661.82 445.55 662.62 446.31 663.42 446.33 664.22 447.67 665.02 448.54 665.82 447.64 666.62 447.80 667.42 448.12 668.22 448.29 669.02 449.85 669.82 450.23 670.62 451.27 671.42 451.11 672.22 452.41 673.02 452.69 673.82 453.60 674.62 453.26 675.42 451.80 676.22 451.13 677.02 451.69 677.82 453.53 678.62 454.02 679.42 455.97 680.22 457.18 681.02 458.21 681.82 456.94 682.62 457.73 683.42 456.79 684.22 456.85 685.02 454.50 685.82 452.27 686.62 449.08 687.42 450.55 688.22 450.33 689.02 449.11 689.82 450.62 690.62 450.39 691.42 450.89 692.22 453.27 693.02 455.77 693.82 456.54 694.62 457.86 695.42 455.66 696.22 456.70 697.02 457.30 697.82 458.38 698.62 458.84 699.42 458.99 700.22 459.65 701.02 457.77 701.82 457.15 702.62 455.08 703.42 458.11 704.22 459.47 705.02 461.38 705.82 461.06 706.62 460.73 707.42 461.98 708.22 459.31 709.02 457.47 709.82 456.20 710.62 457.60 711.42 458.08 712.22 454.69 713.02 450.61 713.82 446.70 714.62 445.50 715.42 445.71 716.22 445.51 717.02 447.05 717.82 447.71 718.62 449.69 719.42 450.23 720.22 450.84 721.02 451.59 721.82 449.74 722.62 448.43 723.42 447.23 724.22 444.13 725.02 441.15 725.82 439.38 726.62 436.74 727.42 433.13 728.22 435.44 729.02 437.80 729.82 439.96 730.62 443.29 731.42 445.75 732.22 449.24 733.02 451.04 733.82 451.30 734.62 452.23 735.42 453.07 736.22 455.26 737.02 455.74 737.82 455.78 738.62 457.42 739.42 457.38 740.22 455.95 741.02 453.32 741.82 455.06 742.62 457.24 743.42 458.00 744.22 460.96 745.02 460.25 745.82 458.97 746.62 456.93 747.42 456.11 748.22 456.21 749.02 455.44 749.82 454.77 750.62 453.96 751.42 452.44 752.22 451.47 753.02 450.55 753.82 452.27 754.62 453.36 755.42 451.55 756.22 450.74 757.02 450.56 757.82 450.64 758.62 451.28 759.42 453.24 760.22 454.04 761.02 455.56 761.82 453.85 762.62 454.52 763.42 454.97 764.22 455.12 765.02 455.02 765.82 455.33 766.62 454.42 767.42 455.58 768.22 454.61 769.02 453.17 769.82 453.08 770.62 449.02 771.42 448.88 772.22 446.56 773.02 446.64 773.82 446.62 774.62 445.99 775.42 447.79 776.22 447.46 777.02 449.09 777.82 449.51 778.62 448.73 779.42 447.60 780.22 446.51 781.02 446.99 781.82 446.95 782.62 448.41 783.42 447.20 784.22 447.17 785.02 447.15 785.82 447.24 786.62 446.85 787.42 446.56 788.22 447.07 789.02 446.05 789.82 445.23 790.62 444.82 791.42 444.53 792.22 444.01 793.02 443.81 793.82 442.80 794.62 442.68 795.42 441.99 796.22 441.94 797.02 441.11 797.82 440.34 798.62 439.27 799.42 438.07 800.22 436.86 801.02 435.54 801.82 435.68 802.62 435.31 803.42 435.47 804.22 436.59 805.02 435.62 805.82 435.36 806.62 435.73 807.42 432.77 808.22 429.91 809.02 431.46 809.82 431.60 810.62 429.85 811.42 429.92 812.22 430.35 813.02 428.57 813.82 429.08 814.62 428.90 815.42 429.45 816.22 428.94 817.02 431.25 817.82 431.42 818.62 432.21 819.42 432.40 820.22 431.56 821.02 432.32 821.82 431.35 822.62 431.77 823.42 430.96 824.22 430.90 825.02 430.61 825.82 430.79 826.62 430.98 827.42 430.58 828.22 431.70 829.02 432.94 829.82 432.78 830.62 432.49 831.42 434.58 832.22 436.22 833.02 437.43 833.82 437.36 834.62 437.97 835.42 439.14 836.22 437.27 837.02 437.58 837.82 437.57 838.62 438.14 839.42 439.94 840.22 439.16 841.02 439.42 841.82 436.97 842.62 437.15 843.42 438.06 844.22 437.46 845.02 437.47 845.82 437.64 846.62 437.35 847.42 435.81 848.22 434.24 849.02 433.79 849.82 432.43 850.62 432.16 851.42 433.31 852.22 432.43 853.02 433.15 853.82 434.19 854.62 434.06 855.42 434.43 856.22 436.47 857.02 436.34 857.82 435.21 858.62 435.25 859.42 435.64 860.22 434.65 861.02 435.89 861.82 436.37 862.62 435.69 863.42 436.97 864.22 436.64 865.02 437.17 865.82 437.49 866.62 435.71 867.42 434.75 868.22 434.43 869.02 435.37 869.82 432.49 870.62 433.52 871.42 433.40 872.22 432.42 873.02 432.46 873.82 431.12 874.62 430.42 875.42 429.75 876.22 428.95 877.02 430.06 877.82 429.43 878.62 430.93 879.42 432.29 880.22 434.66 881.02 434.37 881.82 435.81 882.62 436.53 883.42 436.96 884.22 437.77 885.02 437.64 885.82 437.97 886.62 439.13 887.42 439.96 888.22 439.32 889.02 438.98 889.82 439.26 890.62 440.25 891.42 439.95 892.22 438.65 893.02 438.93 893.82 439.07 894.62 439.07 895.42 437.11 896.22 435.34 897.02 434.00 897.82 431.70 898.62 430.73 899.42 429.26 900.22 430.14 901.02 429.70 901.82 429.61 902.62 429.06 903.42 428.94 904.22 429.24 905.02 430.71 905.82 430.57 906.62 430.89 907.42 431.92 908.22 432.85 909.02 433.11 909.82 433.54 910.62 432.94 911.42 434.09 912.22 434.06 913.02 434.81 913.82 434.17 914.62 435.06 915.42 433.68 916.22 435.02 917.02 433.14 917.82 432.79 918.62 431.84 919.42 432.84 920.22 433.14 921.02 434.81 921.82 434.85 922.62 434.60 923.42 434.55 924.22 435.20 925.02 434.60 925.82 433.90 926.62 434.72 927.42 434.17 928.22 434.22 929.02 433.71 929.82 432.20 930.62 430.66 931.42 428.43 932.22 428.06 933.02 427.50 933.82 426.17 934.62 427.02 935.42 427.22 936.22 427.22 937.02 431.00 937.82 430.91 938.62 430.26 939.42 432.25 940.22 435.35 941.02 434.93 941.82 435.15 942.62 435.50 943.42 435.59 944.22 436.26 945.02 436.02 945.82 435.73 946.62 436.89 947.42 436.95 948.22 438.38 949.02 438.88 949.82 438.73 950.62 437.98 951.42 438.69 952.22 438.55 953.02 437.52 953.82 437.66 954.62 437.37 955.42 437.08 956.22 436.37 957.02 435.78 957.82 435.91 958.62 436.41 959.42 436.70 960.22 436.09 961.02 435.02 961.82 433.88 962.62 433.20 963.42 432.14 964.22 431.26 965.02 430.82 965.82 429.34 966.62 430.55 967.42 430.68 968.22 430.77 969.02 431.88" fill="none" stroke="#f00000" stroke-width="1.5" stroke-linejoin="round"/></g>
<path d="M5.8 186.00H970.95M970.45 37.3V186.5" stroke="#b4b4b4" stroke-width="1.1" fill="none"/>
<text transform="scale(0.6957,1)" x="44.38 50.92" y="194.20" font-family='"Liberation Sans","Noto Sans CJK JP",sans-serif' font-size="10.9" fill="#adadad" text-anchor="middle">05</text>
<text transform="scale(0.6957,1)" x="59.61 66.15" y="194.20" font-family='"Liberation Sans","Noto Sans CJK JP",sans-serif' font-size="10.9" fill="#adadad" text-anchor="middle" font-weight="bold">06</text>
<text transform="scale(0.6957,1)" x="95.69 102.23" y="194.20" font-family='"Liberation Sans","Noto Sans CJK JP",sans-serif' font-size="10.9" fill="#adadad" text-anchor="middle">09</text>
<text transform="scale(0.6957,1)" x="164.97 171.51" y="194.20" font-family='"Liberation Sans","Noto Sans CJK JP",sans-serif' font-size="10.9" fill="#adadad" text-anchor="middle">10</text>
<text transform="scale(0.6957,1)" x="234.25 240.79" y="194.20" font-family='"Liberation Sans","Noto Sans CJK JP",sans-serif' font-size="10.9" fill="#adadad" text-anchor="middle">11</text>
<text transform="scale(0.6957,1)" x="303.46 310.00" y="194.20" font-family='"Liberation Sans","Noto Sans CJK JP",sans-serif' font-size="10.9" fill="#adadad" text-anchor="middle">12</text>
<text transform="scale(0.6957,1)" x="372.82 379.36" y="194.20" font-family='"Liberation Sans","Noto Sans CJK JP",sans-serif' font-size="10.9" fill="#adadad" text-anchor="middle">13</text>
<text transform="scale(0.6957,1)" x="441.67 448.21" y="194.20" font-family='"Liberation Sans","Noto Sans CJK JP",sans-serif' font-size="10.9" fill="#adadad" text-anchor="middle">14</text>
<text transform="scale(0.6957,1)" x="492.84 499.38" y="194.20" font-family='"Liberation Sans","Noto Sans CJK JP",sans-serif' font-size="10.9" fill="#adadad" text-anchor="middle">15</text>
<text transform="scale(0.6957,1)" x="522.01 528.55" y="194.20" font-family='"Liberation Sans","Noto Sans CJK JP",sans-serif' font-size="10.9" fill="#adadad" text-anchor="middle">16</text>
<text transform="scale(0.6957,1)" x="556.94 563.48" y="194.20" font-family='"Liberation Sans","Noto Sans CJK JP",sans-serif' font-size="10.9" fill="#adadad" text-anchor="middle">17</text>
<text transform="scale(0.6957,1)" x="626.22 632.76" y="194.20" font-family='"Liberation Sans","Noto Sans CJK JP",sans-serif' font-size="10.9" fill="#adadad" text-anchor="middle">18</text>
<text transform="scale(0.6957,1)" x="696.08 702.62" y="194.20" font-family='"Liberation Sans","Noto Sans CJK JP",sans-serif' font-size="10.9" fill="#adadad" text-anchor="middle">19</text>
<text transform="scale(0.6957,1)" x="765.07 771.61" y="194.20" font-family='"Liberation Sans","Noto Sans CJK JP",sans-serif' font-size="10.9" fill="#adadad" text-anchor="middle">20</text>
<text transform="scale(0.6957,1)" x="827.17 833.71" y="194.20" font-family='"Liberation Sans","Noto Sans CJK JP",sans-serif' font-size="10.9" fill="#adadad" text-anchor="middle">21</text>
<text transform="scale(0.6957,1)" x="897.02 903.56" y="194.20" font-family='"Liberation Sans","Noto Sans CJK JP",sans-serif' font-size="10.9" fill="#adadad" text-anchor="middle">22</text>
<text transform="scale(0.6957,1)" x="966.02 972.56" y="194.20" font-family='"Liberation Sans","Noto Sans CJK JP",sans-serif' font-size="10.9" fill="#adadad" text-anchor="middle">23</text>
<text transform="scale(0.6957,1)" x="1035.73 1042.27" y="194.20" font-family='"Liberation Sans","Noto Sans CJK JP",sans-serif' font-size="10.9" fill="#adadad" text-anchor="middle">00</text>
<text transform="scale(0.6957,1)" x="1103.71 1110.25" y="194.20" font-family='"Liberation Sans","Noto Sans CJK JP",sans-serif' font-size="10.9" fill="#adadad" text-anchor="middle">01</text>
<text transform="scale(0.6957,1)" x="1164.52 1171.06" y="194.20" font-family='"Liberation Sans","Noto Sans CJK JP",sans-serif' font-size="10.9" fill="#adadad" text-anchor="middle">02</text>
<text transform="scale(0.6957,1)" x="1225.32 1231.86" y="194.20" font-family='"Liberation Sans","Noto Sans CJK JP",sans-serif' font-size="10.9" fill="#adadad" text-anchor="middle">03</text>
<text transform="scale(0.6957,1)" x="1289.57 1296.11" y="194.20" font-family='"Liberation Sans","Noto Sans CJK JP",sans-serif' font-size="10.9" fill="#adadad" text-anchor="middle">04</text>
<text transform="scale(0.6957,1)" x="1352.09 1358.63" y="194.20" font-family='"Liberation Sans","Noto Sans CJK JP",sans-serif' font-size="10.9" fill="#adadad" text-anchor="middle">05</text>
<text transform="scale(0.6957,1)" x="1379.26 1385.80" y="194.20" font-family='"Liberation Sans","Noto Sans CJK JP",sans-serif' font-size="10.9" fill="#adadad" text-anchor="middle">06</text>
<text transform="scale(0.6957,1)" x="1037.16 1043.70" y="181.70" font-family='"Liberation Sans","Noto Sans CJK JP",sans-serif' font-size="10.9" fill="#adadad" text-anchor="middle">13</text>
<clipPath id="rp0"><rect x="970.45" y="37.3" width="46.75" height="161.3"/></clipPath><g clip-path="url(#rp0)">
<text transform="scale(0.7217,1)" x="1349.51 1356.05 1362.59 1369.13 1375.67" y="38.70" font-family='"Liberation Sans","Noto Sans CJK JP",sans-serif' font-size="10.9" fill="#adadad" text-anchor="middle">7,950</text>
<text transform="scale(0.7217,1)" x="1349.51 1356.05 1362.59 1369.13 1375.67" y="71.10" font-family='"Liberation Sans","Noto Sans CJK JP",sans-serif' font-size="10.9" fill="#adadad" text-anchor="middle">7,925</text>
<text transform="scale(0.7217,1)" x="1349.51 1356.05 1362.59 1369.13 1375.67" y="103.20" font-family='"Liberation Sans","Noto Sans CJK JP",sans-serif' font-size="10.9" fill="#adadad" text-anchor="middle">7,900</text>
<text transform="scale(0.7217,1)" x="1349.51 1356.05 1362.59 1369.13 1375.67" y="134.80" font-family='"Liberation Sans","Noto Sans CJK JP",sans-serif' font-size="10.9" fill="#adadad" text-anchor="middle">7,875</text>
<text transform="scale(0.7217,1)" x="1349.51 1356.05 1362.59 1369.13 1375.67" y="166.70" font-family='"Liberation Sans","Noto Sans CJK JP",sans-serif' font-size="10.9" fill="#adadad" text-anchor="middle">7,850</text>
<text transform="scale(0.7217,1)" x="1349.51 1356.05 1362.59 1369.13 1375.67" y="198.60" font-family='"Liberation Sans","Noto Sans CJK JP",sans-serif' font-size="10.9" fill="#adadad" text-anchor="middle">7,825</text>
</g>
<path d="M5.8 400.60H970.95M970.45 201.8V401.1M5.8 202.35H970.45" stroke="#b4b4b4" stroke-width="1.1" fill="none"/>
<text transform="scale(0.6957,1)" x="44.38 50.92" y="408.80" font-family='"Liberation Sans","Noto Sans CJK JP",sans-serif' font-size="10.9" fill="#adadad" text-anchor="middle">05</text>
<text transform="scale(0.6957,1)" x="59.61 66.15" y="408.80" font-family='"Liberation Sans","Noto Sans CJK JP",sans-serif' font-size="10.9" fill="#adadad" text-anchor="middle" font-weight="bold">06</text>
<text transform="scale(0.6957,1)" x="95.69 102.23" y="408.80" font-family='"Liberation Sans","Noto Sans CJK JP",sans-serif' font-size="10.9" fill="#adadad" text-anchor="middle">09</text>
<text transform="scale(0.6957,1)" x="164.97 171.51" y="408.80" font-family='"Liberation Sans","Noto Sans CJK JP",sans-serif' font-size="10.9" fill="#adadad" text-anchor="middle">10</text>
<text transform="scale(0.6957,1)" x="234.25 240.79" y="408.80" font-family='"Liberation Sans","Noto Sans CJK JP",sans-serif' font-size="10.9" fill="#adadad" text-anchor="middle">11</text>
<text transform="scale(0.6957,1)" x="303.46 310.00" y="408.80" font-family='"Liberation Sans","Noto Sans CJK JP",sans-serif' font-size="10.9" fill="#adadad" text-anchor="middle">12</text>
<text transform="scale(0.6957,1)" x="372.82 379.36" y="408.80" font-family='"Liberation Sans","Noto Sans CJK JP",sans-serif' font-size="10.9" fill="#adadad" text-anchor="middle">13</text>
<text transform="scale(0.6957,1)" x="441.67 448.21" y="408.80" font-family='"Liberation Sans","Noto Sans CJK JP",sans-serif' font-size="10.9" fill="#adadad" text-anchor="middle">14</text>
<text transform="scale(0.6957,1)" x="492.84 499.38" y="408.80" font-family='"Liberation Sans","Noto Sans CJK JP",sans-serif' font-size="10.9" fill="#adadad" text-anchor="middle">15</text>
<text transform="scale(0.6957,1)" x="522.01 528.55" y="408.80" font-family='"Liberation Sans","Noto Sans CJK JP",sans-serif' font-size="10.9" fill="#adadad" text-anchor="middle">16</text>
<text transform="scale(0.6957,1)" x="556.94 563.48" y="408.80" font-family='"Liberation Sans","Noto Sans CJK JP",sans-serif' font-size="10.9" fill="#adadad" text-anchor="middle">17</text>
<text transform="scale(0.6957,1)" x="626.22 632.76" y="408.80" font-family='"Liberation Sans","Noto Sans CJK JP",sans-serif' font-size="10.9" fill="#adadad" text-anchor="middle">18</text>
<text transform="scale(0.6957,1)" x="696.08 702.62" y="408.80" font-family='"Liberation Sans","Noto Sans CJK JP",sans-serif' font-size="10.9" fill="#adadad" text-anchor="middle">19</text>
<text transform="scale(0.6957,1)" x="765.07 771.61" y="408.80" font-family='"Liberation Sans","Noto Sans CJK JP",sans-serif' font-size="10.9" fill="#adadad" text-anchor="middle">20</text>
<text transform="scale(0.6957,1)" x="827.17 833.71" y="408.80" font-family='"Liberation Sans","Noto Sans CJK JP",sans-serif' font-size="10.9" fill="#adadad" text-anchor="middle">21</text>
<text transform="scale(0.6957,1)" x="897.02 903.56" y="408.80" font-family='"Liberation Sans","Noto Sans CJK JP",sans-serif' font-size="10.9" fill="#adadad" text-anchor="middle">22</text>
<text transform="scale(0.6957,1)" x="966.02 972.56" y="408.80" font-family='"Liberation Sans","Noto Sans CJK JP",sans-serif' font-size="10.9" fill="#adadad" text-anchor="middle">23</text>
<text transform="scale(0.6957,1)" x="1035.73 1042.27" y="408.80" font-family='"Liberation Sans","Noto Sans CJK JP",sans-serif' font-size="10.9" fill="#adadad" text-anchor="middle">00</text>
<text transform="scale(0.6957,1)" x="1103.71 1110.25" y="408.80" font-family='"Liberation Sans","Noto Sans CJK JP",sans-serif' font-size="10.9" fill="#adadad" text-anchor="middle">01</text>
<text transform="scale(0.6957,1)" x="1164.52 1171.06" y="408.80" font-family='"Liberation Sans","Noto Sans CJK JP",sans-serif' font-size="10.9" fill="#adadad" text-anchor="middle">02</text>
<text transform="scale(0.6957,1)" x="1225.32 1231.86" y="408.80" font-family='"Liberation Sans","Noto Sans CJK JP",sans-serif' font-size="10.9" fill="#adadad" text-anchor="middle">03</text>
<text transform="scale(0.6957,1)" x="1289.57 1296.11" y="408.80" font-family='"Liberation Sans","Noto Sans CJK JP",sans-serif' font-size="10.9" fill="#adadad" text-anchor="middle">04</text>
<text transform="scale(0.6957,1)" x="1352.09 1358.63" y="408.80" font-family='"Liberation Sans","Noto Sans CJK JP",sans-serif' font-size="10.9" fill="#adadad" text-anchor="middle">05</text>
<text transform="scale(0.6957,1)" x="1379.26 1385.80" y="408.80" font-family='"Liberation Sans","Noto Sans CJK JP",sans-serif' font-size="10.9" fill="#adadad" text-anchor="middle">06</text>
<text transform="scale(0.6957,1)" x="1037.16 1043.70" y="396.30" font-family='"Liberation Sans","Noto Sans CJK JP",sans-serif' font-size="10.9" fill="#adadad" text-anchor="middle">13</text>
<clipPath id="rp1"><rect x="970.45" y="201.8" width="46.75" height="211.3"/></clipPath><g clip-path="url(#rp1)">
<text transform="scale(0.7217,1)" x="1349.51 1356.05 1362.59 1369.13 1375.67" y="238.20" font-family='"Liberation Sans","Noto Sans CJK JP",sans-serif' font-size="10.9" fill="#adadad" text-anchor="middle">3,925</text>
<text transform="scale(0.7217,1)" x="1349.51 1356.05 1362.59 1369.13 1375.67" y="282.40" font-family='"Liberation Sans","Noto Sans CJK JP",sans-serif' font-size="10.9" fill="#adadad" text-anchor="middle">3,900</text>
<text transform="scale(0.7217,1)" x="1349.51 1356.05 1362.59 1369.13 1375.67" y="326.50" font-family='"Liberation Sans","Noto Sans CJK JP",sans-serif' font-size="10.9" fill="#adadad" text-anchor="middle">3,875</text>
<text transform="scale(0.7217,1)" x="1349.51 1356.05 1362.59 1369.13 1375.67" y="370.90" font-family='"Liberation Sans","Noto Sans CJK JP",sans-serif' font-size="10.9" fill="#adadad" text-anchor="middle">3,850</text>
<text transform="scale(0.7217,1)" x="1349.51 1356.05 1362.59 1369.13 1375.67" y="415.10" font-family='"Liberation Sans","Noto Sans CJK JP",sans-serif' font-size="10.9" fill="#adadad" text-anchor="middle">3,825</text>
</g>
<path d="M5.8 527.00H970.95M970.45 416.7V527.5M5.8 417.25H970.45" stroke="#b4b4b4" stroke-width="1.1" fill="none"/>
<text transform="scale(0.6957,1)" x="44.38 50.92" y="535.20" font-family='"Liberation Sans","Noto Sans CJK JP",sans-serif' font-size="10.9" fill="#adadad" text-anchor="middle">05</text>
<text transform="scale(0.6957,1)" x="59.61 66.15" y="535.20" font-family='"Liberation Sans","Noto Sans CJK JP",sans-serif' font-size="10.9" fill="#adadad" text-anchor="middle" font-weight="bold">06</text>
<text transform="scale(0.6957,1)" x="95.69 102.23" y="535.20" font-family='"Liberation Sans","Noto Sans CJK JP",sans-serif' font-size="10.9" fill="#adadad" text-anchor="middle">09</text>
<text transform="scale(0.6957,1)" x="164.97 171.51" y="535.20" font-family='"Liberation Sans","Noto Sans CJK JP",sans-serif' font-size="10.9" fill="#adadad" text-anchor="middle">10</text>
<text transform="scale(0.6957,1)" x="234.25 240.79" y="535.20" font-family='"Liberation Sans","Noto Sans CJK JP",sans-serif' font-size="10.9" fill="#adadad" text-anchor="middle">11</text>
<text transform="scale(0.6957,1)" x="303.46 310.00" y="535.20" font-family='"Liberation Sans","Noto Sans CJK JP",sans-serif' font-size="10.9" fill="#adadad" text-anchor="middle">12</text>
<text transform="scale(0.6957,1)" x="372.82 379.36" y="535.20" font-family='"Liberation Sans","Noto Sans CJK JP",sans-serif' font-size="10.9" fill="#adadad" text-anchor="middle">13</text>
<text transform="scale(0.6957,1)" x="441.67 448.21" y="535.20" font-family='"Liberation Sans","Noto Sans CJK JP",sans-serif' font-size="10.9" fill="#adadad" text-anchor="middle">14</text>
<text transform="scale(0.6957,1)" x="492.84 499.38" y="535.20" font-family='"Liberation Sans","Noto Sans CJK JP",sans-serif' font-size="10.9" fill="#adadad" text-anchor="middle">15</text>
<text transform="scale(0.6957,1)" x="522.01 528.55" y="535.20" font-family='"Liberation Sans","Noto Sans CJK JP",sans-serif' font-size="10.9" fill="#adadad" text-anchor="middle">16</text>
<text transform="scale(0.6957,1)" x="556.94 563.48" y="535.20" font-family='"Liberation Sans","Noto Sans CJK JP",sans-serif' font-size="10.9" fill="#adadad" text-anchor="middle">17</text>
<text transform="scale(0.6957,1)" x="626.22 632.76" y="535.20" font-family='"Liberation Sans","Noto Sans CJK JP",sans-serif' font-size="10.9" fill="#adadad" text-anchor="middle">18</text>
<text transform="scale(0.6957,1)" x="696.08 702.62" y="535.20" font-family='"Liberation Sans","Noto Sans CJK JP",sans-serif' font-size="10.9" fill="#adadad" text-anchor="middle">19</text>
<text transform="scale(0.6957,1)" x="765.07 771.61" y="535.20" font-family='"Liberation Sans","Noto Sans CJK JP",sans-serif' font-size="10.9" fill="#adadad" text-anchor="middle">20</text>
<text transform="scale(0.6957,1)" x="827.17 833.71" y="535.20" font-family='"Liberation Sans","Noto Sans CJK JP",sans-serif' font-size="10.9" fill="#adadad" text-anchor="middle">21</text>
<text transform="scale(0.6957,1)" x="897.02 903.56" y="535.20" font-family='"Liberation Sans","Noto Sans CJK JP",sans-serif' font-size="10.9" fill="#adadad" text-anchor="middle">22</text>
<text transform="scale(0.6957,1)" x="966.02 972.56" y="535.20" font-family='"Liberation Sans","Noto Sans CJK JP",sans-serif' font-size="10.9" fill="#adadad" text-anchor="middle">23</text>
<text transform="scale(0.6957,1)" x="1035.73 1042.27" y="535.20" font-family='"Liberation Sans","Noto Sans CJK JP",sans-serif' font-size="10.9" fill="#adadad" text-anchor="middle">00</text>
<text transform="scale(0.6957,1)" x="1103.71 1110.25" y="535.20" font-family='"Liberation Sans","Noto Sans CJK JP",sans-serif' font-size="10.9" fill="#adadad" text-anchor="middle">01</text>
<text transform="scale(0.6957,1)" x="1164.52 1171.06" y="535.20" font-family='"Liberation Sans","Noto Sans CJK JP",sans-serif' font-size="10.9" fill="#adadad" text-anchor="middle">02</text>
<text transform="scale(0.6957,1)" x="1225.32 1231.86" y="535.20" font-family='"Liberation Sans","Noto Sans CJK JP",sans-serif' font-size="10.9" fill="#adadad" text-anchor="middle">03</text>
<text transform="scale(0.6957,1)" x="1289.57 1296.11" y="535.20" font-family='"Liberation Sans","Noto Sans CJK JP",sans-serif' font-size="10.9" fill="#adadad" text-anchor="middle">04</text>
<text transform="scale(0.6957,1)" x="1352.09 1358.63" y="535.20" font-family='"Liberation Sans","Noto Sans CJK JP",sans-serif' font-size="10.9" fill="#adadad" text-anchor="middle">05</text>
<text transform="scale(0.6957,1)" x="1379.26 1385.80" y="535.20" font-family='"Liberation Sans","Noto Sans CJK JP",sans-serif' font-size="10.9" fill="#adadad" text-anchor="middle">06</text>
<text transform="scale(0.6957,1)" x="1037.16 1043.70" y="522.70" font-family='"Liberation Sans","Noto Sans CJK JP",sans-serif' font-size="10.9" fill="#adadad" text-anchor="middle">13</text>
<clipPath id="rp2"><rect x="970.45" y="416.7" width="46.75" height="122.30000000000001"/></clipPath><g clip-path="url(#rp2)">
<text transform="scale(0.7217,1)" x="1349.51 1356.05 1362.59 1369.13 1375.67" y="434.50" font-family='"Liberation Sans","Noto Sans CJK JP",sans-serif' font-size="10.9" fill="#adadad" text-anchor="middle">4,050</text>
<text transform="scale(0.7217,1)" x="1349.51 1356.05 1362.59 1369.13 1375.67" y="472.40" font-family='"Liberation Sans","Noto Sans CJK JP",sans-serif' font-size="10.9" fill="#adadad" text-anchor="middle">4,000</text>
<text transform="scale(0.7217,1)" x="1349.51 1356.05 1362.59 1369.13 1375.67" y="510.10" font-family='"Liberation Sans","Noto Sans CJK JP",sans-serif' font-size="10.9" fill="#adadad" text-anchor="middle">3,950</text>
</g>
<text transform="scale(0.7385,1)" x="37.83 44.37 50.91 57.45 63.99 70.53 109.77 116.31 122.85 129.39 135.93 142.47 181.71 188.25 194.79 201.33 207.87 214.41 253.65 260.19 266.73 273.27 279.81 286.35 325.59 332.13 338.67 345.21 351.75 358.29" y="47.60" font-family='"Liberation Sans","Noto Sans CJK JP",sans-serif' font-size="10.9" fill="#adadad" text-anchor="middle">:06:00:7,912:7,912:7,912:7,912</text>
<text x="11.03 20.69 64.16 73.82 117.29 126.95 170.42 180.08 223.55 233.21" y="47.60" font-family='"Liberation Mono","IPAGothic",monospace' font-size="9.7" fill="#adadad" text-anchor="middle">時刻始値高値安値終値</text>
<text transform="scale(0.7385,1)" x="37.83 44.37 50.91 57.45 63.99 70.53 109.77 116.31 122.85 129.39 135.93 142.47 181.71 188.25 194.79 201.33 207.87 214.41 253.65 260.19 266.73 273.27 279.81 286.35 325.59 332.13 338.67 345.21 351.75 358.29" y="212.40" font-family='"Liberation Sans","Noto Sans CJK JP",sans-serif' font-size="10.9" fill="#adadad" text-anchor="middle">:06:00:3,856:3,856:3,856:3,856</text>
<text x="11.03 20.69 64.16 73.82 117.29 126.95 170.42 180.08 223.55 233.21" y="212.40" font-family='"Liberation Mono","IPAGothic",monospace' font-size="9.7" fill="#adadad" text-anchor="middle">時刻始値高値安値終値</text>
<text transform="scale(0.7385,1)" x="11.67 37.83 44.37 50.91 57.45 63.99 77.07 83.61 90.15 96.69 103.23 122.85 129.39 135.93 142.47 149.01 168.63 207.87 214.41 220.95 227.49 234.03 247.11 253.65 260.19 266.73 273.27 292.89 299.43 305.97 312.51 319.05 390.99 397.53 404.07 410.61 417.15 423.69 436.77 443.31 449.85 456.39 462.93" y="427.00" font-family='"Liberation Sans","Noto Sans CJK JP",sans-serif' font-size="10.9" fill="#adadad" text-anchor="middle">[23/027,9121.00][23/023,8561.00]:06:004,056</text>
<text x="83.48" y="427.90" font-family='"Liberation Mono","IPAGothic",monospace' font-size="13.5" fill="#adadad" text-anchor="middle">×</text>
<text x="117.29" y="426.70" font-family='"Liberation Mono","IPAGothic",monospace' font-size="9.5" fill="#adadad" text-anchor="middle">−</text>
<text x="209.06" y="427.90" font-family='"Liberation Mono","IPAGothic",monospace' font-size="13.5" fill="#adadad" text-anchor="middle">×</text>
<text x="15.86 131.78 141.44 247.70 257.36 271.85 281.51" y="427.00" font-family='"Liberation Mono","IPAGothic",monospace' font-size="9.7" fill="#adadad" text-anchor="middle">金白金終値時刻</text>
<rect x="970.35" y="81.70" width="46.85" height="16.4" fill="#d6d6d6"/><text transform="scale(0.7862,1)" x="1251.27 1257.63 1263.99 1270.35 1276.71" y="93.50" font-family='"Liberation Sans","Noto Sans CJK JP",sans-serif' font-size="10.6" fill="#101010" text-anchor="middle" font-weight="bold">7,912</text>
<rect x="970.35" y="354.00" width="46.85" height="16.4" fill="#d6d6d6"/><text transform="scale(0.7862,1)" x="1251.27 1257.63 1263.99 1270.35 1276.71" y="365.80" font-family='"Liberation Sans","Noto Sans CJK JP",sans-serif' font-size="10.6" fill="#101010" text-anchor="middle" font-weight="bold">3,856</text>
<rect x="970.35" y="424.60" width="46.85" height="16.4" fill="#d6d6d6"/><text transform="scale(0.7862,1)" x="1251.27 1257.63 1263.99 1270.35 1276.71" y="436.40" font-family='"Liberation Sans","Noto Sans CJK JP",sans-serif' font-size="10.6" fill="#101010" text-anchor="middle" font-weight="bold">4,056</text>
</svg></div>
<div class="frame"><svg width="1024" height="544" viewBox="0 0 1024 544">
<rect x="1.6" y="19.3" width="3.3" height="524.7" fill="#cbcbcb"/>
<rect x="0" y="0" width="1.6" height="544" fill="#9a9a9a"/>
<rect x="1016.9" y="19" width="3.7" height="525" fill="#bcbcbc"/>
<rect x="1020.6" y="1.2" width="2.7" height="543" fill="#f4f4f4"/>
<rect x="1023.3" y="0" width="0.7" height="544" fill="#c4c4c4"/>
<rect x="1.6" y="538.7" width="1018.9" height="3.9" fill="#bcbcbc"/>
<rect x="0" y="542.6" width="1024" height="1.4" fill="#fafafa"/>
<rect x="0" y="0" width="1021.7" height="1.25" fill="#757371"/>
</svg></div>
</div></body></html>
